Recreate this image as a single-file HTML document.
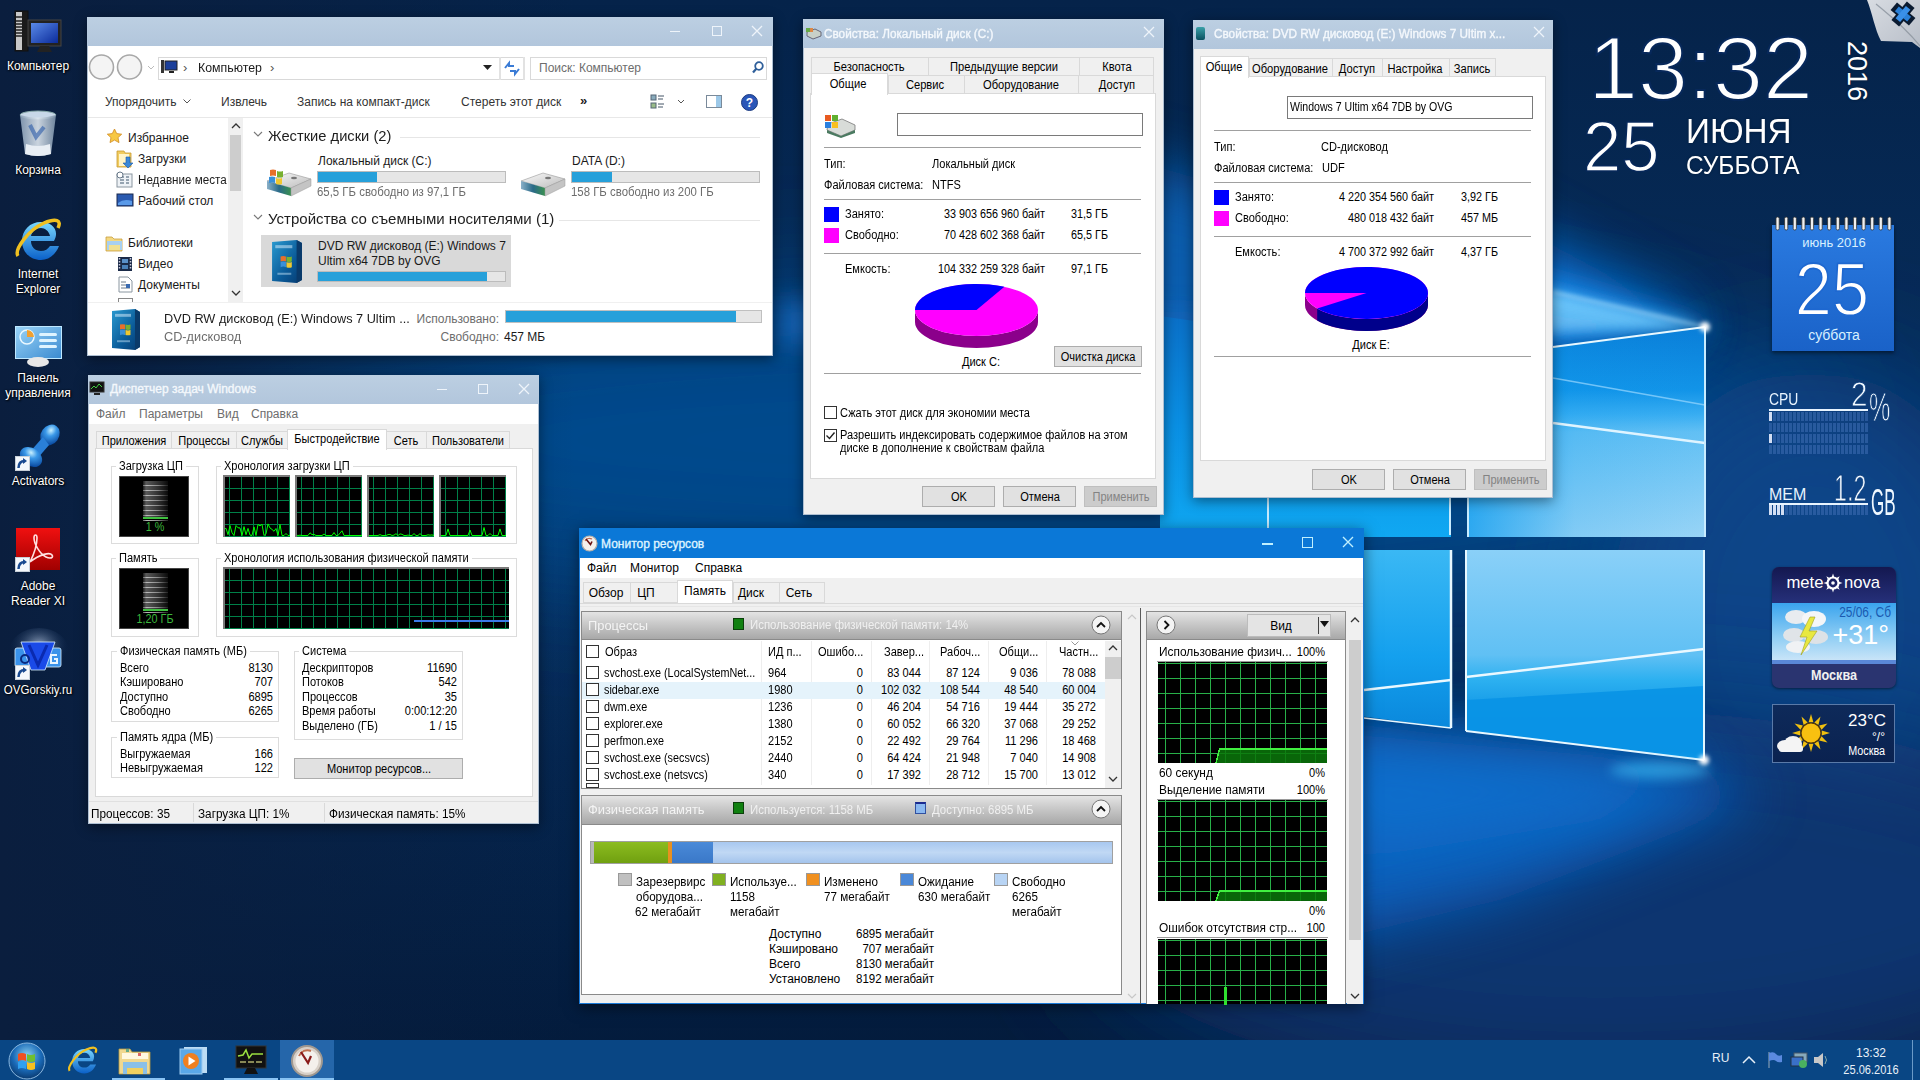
<!DOCTYPE html>
<html><head><meta charset="utf-8">
<style>
*{box-sizing:border-box}
html,body{margin:0;padding:0}
body{width:1920px;height:1080px;position:relative;overflow:hidden;font-family:"Liberation Sans",sans-serif;font-size:12px;color:#000;background:#04214a}
.a{position:absolute}
.t{position:absolute;white-space:nowrap;line-height:1;transform-origin:0 0}
svg{position:absolute;overflow:visible}
</style></head><body>
<svg style="left:0;top:0" width="1920" height="1080" viewBox="0 0 1920 1080">
<defs>
<linearGradient id="bg" x1="0" y1="0" x2="0" y2="1">
<stop offset="0" stop-color="#05234a"/>
<stop offset="0.35" stop-color="#062c5a"/>
<stop offset="0.5" stop-color="#063468"/>
<stop offset="0.7" stop-color="#052650"/>
<stop offset="1" stop-color="#031a3a"/>
</linearGradient>
<linearGradient id="leftdark" x1="0" y1="0" x2="1" y2="0">
<stop offset="0" stop-color="#0a1e3e" stop-opacity="1"/>
<stop offset="0.06" stop-color="#0a1e3e" stop-opacity="0.85"/>
<stop offset="0.3" stop-color="#0a1e3e" stop-opacity="0"/>
</linearGradient>
<linearGradient id="ur" x1="0" y1="0" x2="0" y2="1">
<stop offset="0" stop-color="#0a7ed8"/>
<stop offset="0.3" stop-color="#1294e8"/>
<stop offset="0.42" stop-color="#3aaef2"/>
<stop offset="0.5" stop-color="#62c0f4"/>
<stop offset="1" stop-color="#98d4f6"/>
</linearGradient>
<linearGradient id="ul" x1="0" y1="0" x2="0" y2="1">
<stop offset="0" stop-color="#0a70c8"/>
<stop offset="0.5" stop-color="#0a90e4"/>
<stop offset="1" stop-color="#10a8f2"/>
</linearGradient>
<linearGradient id="lr" x1="0" y1="0" x2="0" y2="1">
<stop offset="0" stop-color="#8ad0f8"/>
<stop offset="0.5" stop-color="#60c0f4"/>
<stop offset="0.62" stop-color="#2cb0f0"/>
<stop offset="0.8" stop-color="#0c92e4"/>
<stop offset="1" stop-color="#0a84d8"/>
</linearGradient>
<linearGradient id="urh" x1="0" y1="0" x2="1" y2="0">
<stop offset="0" stop-color="#0a9aee" stop-opacity="0.75"/>
<stop offset="0.45" stop-color="#0a9aee" stop-opacity="0.15"/>
<stop offset="1" stop-color="#0a9aee" stop-opacity="0"/>
</linearGradient>
<linearGradient id="ll" x1="0" y1="0" x2="0" y2="1">
<stop offset="0" stop-color="#3ab8f4"/>
<stop offset="0.6" stop-color="#14a0ee"/>
<stop offset="1" stop-color="#0a88dc"/>
</linearGradient>
<filter id="b60" x="-50%" y="-50%" width="200%" height="200%"><feGaussianBlur stdDeviation="60"/></filter>
<filter id="b30" x="-50%" y="-50%" width="200%" height="200%"><feGaussianBlur stdDeviation="30"/></filter>
<filter id="b12" x="-50%" y="-50%" width="200%" height="200%"><feGaussianBlur stdDeviation="12"/></filter>
<filter id="b6" x="-50%" y="-50%" width="200%" height="200%"><feGaussianBlur stdDeviation="6"/></filter>
<filter id="b2" x="-50%" y="-50%" width="200%" height="200%"><feGaussianBlur stdDeviation="2"/></filter>
</defs>
<rect width="1920" height="1080" fill="url(#bg)"/>
<!-- middle light band -->
<ellipse cx="1000" cy="440" rx="820" ry="150" fill="#05488c" filter="url(#b60)"/>
<!-- right area -->
<ellipse cx="1810" cy="620" rx="200" ry="250" fill="#0a4488" filter="url(#b60)"/>
<!-- floor glow -->
<ellipse cx="1600" cy="900" rx="520" ry="190" fill="#0a3470" filter="url(#b60)"/>
<polygon points="1150,700 1704,765 1760,800 1500,900 1250,960 1100,900" fill="#0a62c0" opacity="0.9" filter="url(#b30)"/>
<polygon points="1300,730 1704,765 1600,820 1350,860" fill="#0a74d4" opacity="0.7" filter="url(#b30)"/>

<!-- beams from top corner -->
<polygon points="1705,327 1100,150 1100,360" fill="#0a68c0" opacity="0.8" filter="url(#b30)"/>

<polygon points="1705,327 1450,190 1450,360" fill="#0a6ccc" opacity="0.9" filter="url(#b30)"/>
<polygon points="1720,327 1450,250 1450,350" fill="#1a90ec" opacity="0.9" filter="url(#b12)"/>
<polygon points="1705,327 1450,268 1450,335" fill="#7ad0ff" opacity="0.85" filter="url(#b6)"/>

<polygon points="1705,327 780,300 780,345" fill="#1a70c8" opacity="0.7" filter="url(#b12)"/>
<rect width="1920" height="1080" fill="url(#leftdark)"/>
<!-- upper panes -->
<polygon points="1468,357 1705,327 1705,537 1468,537" fill="url(#ur)"/>
<polygon points="1468,357 1705,327 1705,537 1468,537" fill="url(#urh)"/>
<polygon points="1160,316 1451,359 1451,537 1160,537" fill="url(#ul)"/>
<!-- lower panes -->
<polygon points="1466,550 1704,550 1704,760 1466,731" fill="url(#lr)"/>
<polygon points="1160,550 1451,550 1451,728 1160,690" fill="url(#ll)"/>
<polygon points="1466,700 1704,686 1704,760 1466,731" fill="#0a94e6" opacity="0.95"/>
<!-- white lines -->
<line x1="1466" y1="677" x2="1704" y2="649" stroke="#eaf8ff" stroke-width="2.5"/>
<line x1="1364" y1="690" x2="1451" y2="680" stroke="#eaf8ff" stroke-width="2.5"/>
<line x1="1553" y1="423" x2="1705" y2="443" stroke="#dff4ff" stroke-width="2.5"/>
<line x1="1553" y1="378" x2="1705" y2="405" stroke="#9ad8ff" stroke-width="1.5" opacity="0.7"/>
<line x1="1705" y1="327" x2="1705" y2="537" stroke="#c8ecff" stroke-width="2"/>
<line x1="1704" y1="550" x2="1704" y2="760" stroke="#e0f6ff" stroke-width="2"/>
<line x1="1466" y1="731" x2="1704" y2="760" stroke="#e8f8ff" stroke-width="2"/>
<line x1="1466" y1="550" x2="1466" y2="731" stroke="#e8f8ff" stroke-width="2"/>
<line x1="1451" y1="550" x2="1451" y2="728" stroke="#e8f8ff" stroke-width="2.5"/>
<line x1="1364" y1="718" x2="1451" y2="728" stroke="#e8f8ff" stroke-width="1.5"/>
<line x1="1268" y1="498" x2="1268" y2="530" stroke="#c8ecff" stroke-width="2"/>
<line x1="1450" y1="498" x2="1450" y2="535" stroke="#c8ecff" stroke-width="2"/>
<line x1="1468" y1="498" x2="1468" y2="537" stroke="#c8ecff" stroke-width="2"/>
<line x1="1553" y1="347" x2="1705" y2="327" stroke="#e8f8ff" stroke-width="2"/>
<line x1="1553" y1="292" x2="1705" y2="327" stroke="#bfe8ff" stroke-width="2" opacity="0.8" filter="url(#b2)"/>
<!-- corner glows -->
<ellipse cx="1660" cy="770" rx="50" ry="9" fill="#40c8ff" opacity="0.55" filter="url(#b6)"/>
<circle cx="1704" cy="760" r="5" fill="#fff" filter="url(#b2)"/>
<circle cx="1705" cy="327" r="5" fill="#fff" filter="url(#b2)"/>
<!-- top shadow at resmon -->
</svg>
<svg style="left:12px;top:9px" width="52" height="45"><defs><linearGradient id="scr" x1="0" y1="0" x2="1" y2="1"><stop offset="0" stop-color="#5a8ae8"/><stop offset="1" stop-color="#0a2a9a"/></linearGradient></defs><rect x="3" y="2" width="13" height="40" fill="#1a1a1a" stroke="#111"/><rect x="4" y="3" width="6" height="38" fill="#c8c8c8"/><path d="M4 8h6M4 12h6M4 15h6M4 18h6M4 21h6M4 24h6M4 27h6" stroke="#222" stroke-width="1.3"/><rect x="16" y="11" width="33" height="26" fill="#222" stroke="#444"/><rect x="19" y="14" width="27" height="20" fill="url(#scr)"/><path d="M28 37h9l3 6H25z" fill="#222"/></svg>
<div class="t" style="left:38px;top:59.8px;font-size:12px;color:#fff;font-weight:normal;font-family:'Liberation Sans',sans-serif;transform:scaleX(1.0) translateX(-50%);text-shadow:0 0 2px #000,1px 1px 2px #000;">Компьютер</div>
<svg style="left:18px;top:110px" width="40" height="48"><defs><linearGradient id="bin" x1="0" y1="0" x2="1" y2="0"><stop offset="0" stop-color="#8aa0b8"/><stop offset="0.5" stop-color="#dfe8f0"/><stop offset="1" stop-color="#7a90a8"/></linearGradient></defs><ellipse cx="20" cy="5" rx="18" ry="4" fill="#c8d8e8" stroke="#8aa"/><path d="M2 5L7 44Q20 48 33 44L38 5Q20 10 2 5z" fill="url(#bin)" opacity="0.9"/><path d="M8 34Q20 38 32 34L33 44Q20 48 7 44z" fill="#e8eef4"/><path d="M12 15l6 12 8-10" stroke="#2a5aa8" stroke-width="4" fill="none" opacity="0.6"/></svg>
<div class="t" style="left:38px;top:163.8px;font-size:12px;color:#fff;font-weight:normal;font-family:'Liberation Sans',sans-serif;transform:scaleX(1.0) translateX(-50%);text-shadow:0 0 2px #000,1px 1px 2px #000;">Корзина</div>
<svg style="left:14px;top:216px" width="48" height="48" viewBox="0 0 48 48"><defs><linearGradient id="ie14" x1="0" y1="0" x2="0" y2="1"><stop offset="0" stop-color="#7ad8ff"/><stop offset="1" stop-color="#0a60c8"/></linearGradient></defs><path d="M40 25H17C17 31 21 35 27 35C31 35 34 33 36 30H45C42 38 35 44 27 44C16 44 8 36 8 25C8 14 16 6 27 6C38 6 46 14 40 25zM17 20H36C35 15 31 12 27 12C22 12 18 15 17 20z" fill="url(#ie14)"/><path d="M4 40C0 34 14 14 30 7C42 2 48 4 44 12" stroke="#f0c020" stroke-width="3.5" fill="none"/></svg>
<div class="t" style="left:38px;top:267.8px;font-size:12px;color:#fff;font-weight:normal;font-family:'Liberation Sans',sans-serif;transform:scaleX(1.0) translateX(-50%);text-shadow:0 0 2px #000,1px 1px 2px #000;">Internet</div>
<div class="t" style="left:38px;top:282.8px;font-size:12px;color:#fff;font-weight:normal;font-family:'Liberation Sans',sans-serif;transform:scaleX(1.0) translateX(-50%);text-shadow:0 0 2px #000,1px 1px 2px #000;">Explorer</div>
<svg style="left:15px;top:326px" width="47" height="41"><defs><linearGradient id="cp" x1="0" y1="0" x2="1" y2="1"><stop offset="0" stop-color="#9ad4f8"/><stop offset="1" stop-color="#3a8ad0"/></linearGradient></defs><rect x="0.5" y="0.5" width="46" height="32" fill="url(#cp)" stroke="#bfe8ff"/><circle cx="12" cy="11" r="7" fill="none" stroke="#eaf8ff" stroke-width="1.5"/><path d="M12 4a7 7 0 0 1 7 7h-7z" fill="#f0a030"/><rect x="24" y="7" width="18" height="3" rx="1.5" fill="#dff4ff"/><rect x="24" y="13" width="18" height="3" rx="1.5" fill="#dff4ff"/><rect x="24" y="19" width="18" height="3" rx="1.5" fill="#dff4ff"/><ellipse cx="23" cy="36" rx="11" ry="5" fill="#e8e8e8"/></svg>
<div class="t" style="left:38px;top:371.8px;font-size:12px;color:#fff;font-weight:normal;font-family:'Liberation Sans',sans-serif;transform:scaleX(1.0) translateX(-50%);text-shadow:0 0 2px #000,1px 1px 2px #000;">Панель</div>
<div class="t" style="left:38px;top:386.8px;font-size:12px;color:#fff;font-weight:normal;font-family:'Liberation Sans',sans-serif;transform:scaleX(1.0) translateX(-50%);text-shadow:0 0 2px #000,1px 1px 2px #000;">управления</div>
<svg style="left:15px;top:423px" width="46" height="48"><defs><radialGradient id="pin" cx="0.4" cy="0.3" r="0.7"><stop offset="0" stop-color="#c8f0ff"/><stop offset="0.4" stop-color="#3a98e8"/><stop offset="1" stop-color="#0a4aa0"/></radialGradient></defs><ellipse cx="35" cy="12" rx="9" ry="11" transform="rotate(35 35 12)" fill="url(#pin)"/><path d="M28 14L14 30 22 36 34 22z" fill="#2a80d8"/><ellipse cx="16" cy="34" rx="12" ry="9" transform="rotate(35 16 34)" fill="url(#pin)"/></svg>
<svg style="left:15px;top:456px" width="15" height="15"><rect x="0.5" y="0.5" width="14" height="14" fill="#f4f8fc" stroke="#c8d0d8"/><path d="M3.5 12C3.5 7 6 5 10 5" stroke="#1a4a90" stroke-width="2.5" fill="none"/><path d="M8 2l4 3-4 3z" fill="#1a4a90"/></svg>
<div class="t" style="left:38px;top:474.8px;font-size:12px;color:#fff;font-weight:normal;font-family:'Liberation Sans',sans-serif;transform:scaleX(1.0) translateX(-50%);text-shadow:0 0 2px #000,1px 1px 2px #000;">Activators</div>
<svg style="left:16px;top:528px" width="44" height="42"><defs><linearGradient id="adb" x1="0" y1="0" x2="0" y2="1"><stop offset="0" stop-color="#f01010"/><stop offset="1" stop-color="#a00000"/></linearGradient></defs><rect width="44" height="42" fill="url(#adb)"/><path d="M14 34C18 26 21 16 21 10C21 6 18 6 18 10C18 16 24 26 30 29C34 31 38 30 36 27C34 24 24 26 14 34z" stroke="#ffe0e0" stroke-width="1.6" fill="none"/></svg>
<svg style="left:15px;top:557px" width="15" height="15"><rect x="0.5" y="0.5" width="14" height="14" fill="#f4f8fc" stroke="#c8d0d8"/><path d="M3.5 12C3.5 7 6 5 10 5" stroke="#1a4a90" stroke-width="2.5" fill="none"/><path d="M8 2l4 3-4 3z" fill="#1a4a90"/></svg>
<div class="t" style="left:38px;top:579.8px;font-size:12px;color:#fff;font-weight:normal;font-family:'Liberation Sans',sans-serif;transform:scaleX(1.0) translateX(-50%);text-shadow:0 0 2px #000,1px 1px 2px #000;">Adobe</div>
<div class="t" style="left:38px;top:594.8px;font-size:12px;color:#fff;font-weight:normal;font-family:'Liberation Sans',sans-serif;transform:scaleX(1.0) translateX(-50%);text-shadow:0 0 2px #000,1px 1px 2px #000;">Reader XI</div>
<svg style="left:8px;top:628px" width="62" height="50"><defs><radialGradient id="ovgg" cx="0.5" cy="0.35" r="0.5"><stop offset="0" stop-color="#c8d8f0" stop-opacity="0.7"/><stop offset="1" stop-color="#0a2a58" stop-opacity="0"/></radialGradient></defs><ellipse cx="31" cy="24" rx="30" ry="24" fill="url(#ovgg)"/><rect x="7" y="20" width="46" height="19" rx="2" fill="#3a92ea" stroke="#d8f0ff" stroke-width="0.8"/><path d="M13 14h34l-10 28h-14z" fill="#1a4ae8" stroke="#d8f0ff" stroke-width="0.8"/><path d="M21 17l9 20 9-20" stroke="#0a2ab0" stroke-width="3" fill="none"/><circle cx="17" cy="31" r="4" fill="none" stroke="#0a2a80" stroke-width="2"/><path d="M49 27h-6v8h6v-4h-3" stroke="#e8f4ff" stroke-width="2" fill="none"/></svg>
<svg style="left:15px;top:665px" width="15" height="15"><rect x="0.5" y="0.5" width="14" height="14" fill="#f4f8fc" stroke="#c8d0d8"/><path d="M3.5 12C3.5 7 6 5 10 5" stroke="#1a4a90" stroke-width="2.5" fill="none"/><path d="M8 2l4 3-4 3z" fill="#1a4a90"/></svg>
<div class="t" style="left:38px;top:683.8px;font-size:12px;color:#fff;font-weight:normal;font-family:'Liberation Sans',sans-serif;transform:scaleX(0.96) translateX(-50%);text-shadow:0 0 2px #000,1px 1px 2px #000;">OVGorskiy.ru</div>
<div class="t" style="left:1588px;top:24.4px;font-size:89px;color:#fff;font-weight:normal;font-family:'Liberation Sans',sans-serif;transform:scaleX(1.01);-webkit-text-stroke:2.2px #07285a;">13:32</div>
<div class="t" style="left:1843px;top:41px;font-size:27px;color:#fff;transform-origin:0 0;transform:translateX(27px) rotate(90deg);text-shadow:0 0 3px rgba(0,0,0,.3);">2016</div>
<div class="t" style="left:1583px;top:110.7px;font-size:71px;color:#fff;font-weight:normal;font-family:'Liberation Sans',sans-serif;transform:scaleX(0.97);-webkit-text-stroke:1.6px #07285a;">25</div>
<div class="t" style="left:1686px;top:112.8px;font-size:35px;color:#fff;font-weight:normal;font-family:'Liberation Sans',sans-serif;transform:scaleX(0.95);text-shadow:0 0 3px rgba(0,0,0,.3);">ИЮНЯ</div>
<div class="t" style="left:1686px;top:151.9px;font-size:26px;color:#fff;font-weight:normal;font-family:'Liberation Sans',sans-serif;transform:scaleX(0.94);text-shadow:0 0 3px rgba(0,0,0,.3);">СУББОТА</div>
<svg style="left:1860px;top:0px" width="60" height="52"><defs><linearGradient id="curl" x1="0" y1="0" x2="1" y2="1"><stop offset="0" stop-color="#d8dce2"/><stop offset="1" stop-color="#b8bec8"/></linearGradient></defs><path d="M7 0H60V48L52 42 21 41C15 30 12 12 7 0z" fill="url(#curl)"/><path d="M16 4C28 14 44 26 60 46" stroke="#8a929c" stroke-width="1.2" fill="none" opacity="0.8"/><g transform="rotate(40 43 14)"><rect x="31" y="9" width="24" height="10" fill="#0a1a30"/><rect x="38" y="2" width="10" height="24" fill="#0a1a30"/><rect x="35" y="11" width="16" height="6" fill="#2a80d8"/><rect x="40" y="6" width="6" height="16" fill="#3a90e8"/></g></svg>
<div class="a" style="left:1772px;top:225px;width:122px;height:126px;background:linear-gradient(#2a7ae0,#1a62c8);box-shadow:0 2px 4px rgba(0,0,0,.5)"></div>
<svg style="left:1772px;top:216px" width="122" height="16"><rect x="4.0" y="1" width="3.2" height="13" rx="1.5" fill="#f0f0f0" stroke="#333" stroke-width="0.8"/><rect x="12.6" y="1" width="3.2" height="13" rx="1.5" fill="#f0f0f0" stroke="#333" stroke-width="0.8"/><rect x="21.2" y="1" width="3.2" height="13" rx="1.5" fill="#f0f0f0" stroke="#333" stroke-width="0.8"/><rect x="29.8" y="1" width="3.2" height="13" rx="1.5" fill="#f0f0f0" stroke="#333" stroke-width="0.8"/><rect x="38.4" y="1" width="3.2" height="13" rx="1.5" fill="#f0f0f0" stroke="#333" stroke-width="0.8"/><rect x="47.0" y="1" width="3.2" height="13" rx="1.5" fill="#f0f0f0" stroke="#333" stroke-width="0.8"/><rect x="55.6" y="1" width="3.2" height="13" rx="1.5" fill="#f0f0f0" stroke="#333" stroke-width="0.8"/><rect x="64.2" y="1" width="3.2" height="13" rx="1.5" fill="#f0f0f0" stroke="#333" stroke-width="0.8"/><rect x="72.8" y="1" width="3.2" height="13" rx="1.5" fill="#f0f0f0" stroke="#333" stroke-width="0.8"/><rect x="81.4" y="1" width="3.2" height="13" rx="1.5" fill="#f0f0f0" stroke="#333" stroke-width="0.8"/><rect x="90.0" y="1" width="3.2" height="13" rx="1.5" fill="#f0f0f0" stroke="#333" stroke-width="0.8"/><rect x="98.6" y="1" width="3.2" height="13" rx="1.5" fill="#f0f0f0" stroke="#333" stroke-width="0.8"/><rect x="107.2" y="1" width="3.2" height="13" rx="1.5" fill="#f0f0f0" stroke="#333" stroke-width="0.8"/><rect x="115.8" y="1" width="3.2" height="13" rx="1.5" fill="#f0f0f0" stroke="#333" stroke-width="0.8"/></svg>
<div class="t" style="left:1834px;top:236.4px;font-size:13px;color:#d8f0ff;font-weight:normal;font-family:'Liberation Sans',sans-serif;transform:scaleX(1.0) translateX(-50%);">июнь 2016</div>
<div class="t" style="left:1832px;top:252.2px;font-size:75px;color:#fff;font-weight:normal;font-family:'Liberation Sans',sans-serif;transform:scaleX(0.89) translateX(-50%);-webkit-text-stroke:1.8px #1e68d0;">25</div>
<div class="t" style="left:1834px;top:328.1px;font-size:14px;color:#d8f0ff;font-weight:normal;font-family:'Liberation Sans',sans-serif;transform:scaleX(1.0) translateX(-50%);">суббота</div>
<div class="t" style="left:1769px;top:392.4px;font-size:16px;color:#e8f4ff;font-weight:normal;font-family:'Liberation Sans',sans-serif;transform:scaleX(0.87);">CPU</div>
<div class="a" style="left:1769px;top:409px;width:99px;height:1.5px;background:#e8f4ff;"></div>
<div class="t" style="left:1851px;top:376.2px;font-size:35px;color:#f0f8ff;font-weight:normal;font-family:'Liberation Sans',sans-serif;transform:scaleX(0.85);-webkit-text-stroke:0.8px #0a3a78;">2</div>
<div class="t" style="left:1869px;top:387.0px;font-size:40px;color:#f0f8ff;font-weight:normal;font-family:'Liberation Sans',sans-serif;transform:scaleX(0.6);-webkit-text-stroke:1px #0a3a78;">%</div>
<svg style="left:1769px;top:412px" width="100" height="44"><rect x="0" y="0" width="3" height="9" fill="#e8eeff" opacity="0.9"/><rect x="4" y="0" width="3" height="9" fill="#3a6ab0" opacity="0.6"/><rect x="8" y="0" width="3" height="9" fill="#3a6ab0" opacity="0.6"/><rect x="12" y="0" width="3" height="9" fill="#3a6ab0" opacity="0.6"/><rect x="16" y="0" width="3" height="9" fill="#3a6ab0" opacity="0.6"/><rect x="20" y="0" width="3" height="9" fill="#3a6ab0" opacity="0.6"/><rect x="24" y="0" width="3" height="9" fill="#3a6ab0" opacity="0.6"/><rect x="28" y="0" width="3" height="9" fill="#3a6ab0" opacity="0.6"/><rect x="32" y="0" width="3" height="9" fill="#3a6ab0" opacity="0.6"/><rect x="36" y="0" width="3" height="9" fill="#3a6ab0" opacity="0.6"/><rect x="40" y="0" width="3" height="9" fill="#3a6ab0" opacity="0.6"/><rect x="44" y="0" width="3" height="9" fill="#3a6ab0" opacity="0.6"/><rect x="48" y="0" width="3" height="9" fill="#3a6ab0" opacity="0.6"/><rect x="52" y="0" width="3" height="9" fill="#3a6ab0" opacity="0.6"/><rect x="56" y="0" width="3" height="9" fill="#3a6ab0" opacity="0.6"/><rect x="60" y="0" width="3" height="9" fill="#3a6ab0" opacity="0.6"/><rect x="64" y="0" width="3" height="9" fill="#3a6ab0" opacity="0.6"/><rect x="68" y="0" width="3" height="9" fill="#3a6ab0" opacity="0.6"/><rect x="72" y="0" width="3" height="9" fill="#3a6ab0" opacity="0.6"/><rect x="76" y="0" width="3" height="9" fill="#3a6ab0" opacity="0.6"/><rect x="80" y="0" width="3" height="9" fill="#3a6ab0" opacity="0.6"/><rect x="84" y="0" width="3" height="9" fill="#3a6ab0" opacity="0.6"/><rect x="88" y="0" width="3" height="9" fill="#3a6ab0" opacity="0.6"/><rect x="92" y="0" width="3" height="9" fill="#3a6ab0" opacity="0.6"/><rect x="96" y="0" width="3" height="9" fill="#3a6ab0" opacity="0.6"/><rect x="0" y="11" width="3" height="9" fill="#3a6ab0" opacity="0.6"/><rect x="4" y="11" width="3" height="9" fill="#3a6ab0" opacity="0.6"/><rect x="8" y="11" width="3" height="9" fill="#3a6ab0" opacity="0.6"/><rect x="12" y="11" width="3" height="9" fill="#3a6ab0" opacity="0.6"/><rect x="16" y="11" width="3" height="9" fill="#3a6ab0" opacity="0.6"/><rect x="20" y="11" width="3" height="9" fill="#3a6ab0" opacity="0.6"/><rect x="24" y="11" width="3" height="9" fill="#3a6ab0" opacity="0.6"/><rect x="28" y="11" width="3" height="9" fill="#3a6ab0" opacity="0.6"/><rect x="32" y="11" width="3" height="9" fill="#3a6ab0" opacity="0.6"/><rect x="36" y="11" width="3" height="9" fill="#3a6ab0" opacity="0.6"/><rect x="40" y="11" width="3" height="9" fill="#3a6ab0" opacity="0.6"/><rect x="44" y="11" width="3" height="9" fill="#3a6ab0" opacity="0.6"/><rect x="48" y="11" width="3" height="9" fill="#3a6ab0" opacity="0.6"/><rect x="52" y="11" width="3" height="9" fill="#3a6ab0" opacity="0.6"/><rect x="56" y="11" width="3" height="9" fill="#3a6ab0" opacity="0.6"/><rect x="60" y="11" width="3" height="9" fill="#3a6ab0" opacity="0.6"/><rect x="64" y="11" width="3" height="9" fill="#3a6ab0" opacity="0.6"/><rect x="68" y="11" width="3" height="9" fill="#3a6ab0" opacity="0.6"/><rect x="72" y="11" width="3" height="9" fill="#3a6ab0" opacity="0.6"/><rect x="76" y="11" width="3" height="9" fill="#3a6ab0" opacity="0.6"/><rect x="80" y="11" width="3" height="9" fill="#3a6ab0" opacity="0.6"/><rect x="84" y="11" width="3" height="9" fill="#3a6ab0" opacity="0.6"/><rect x="88" y="11" width="3" height="9" fill="#3a6ab0" opacity="0.6"/><rect x="92" y="11" width="3" height="9" fill="#3a6ab0" opacity="0.6"/><rect x="96" y="11" width="3" height="9" fill="#3a6ab0" opacity="0.6"/><rect x="0" y="22" width="3" height="9" fill="#e8eeff" opacity="0.9"/><rect x="4" y="22" width="3" height="9" fill="#3a6ab0" opacity="0.6"/><rect x="8" y="22" width="3" height="9" fill="#3a6ab0" opacity="0.6"/><rect x="12" y="22" width="3" height="9" fill="#3a6ab0" opacity="0.6"/><rect x="16" y="22" width="3" height="9" fill="#3a6ab0" opacity="0.6"/><rect x="20" y="22" width="3" height="9" fill="#3a6ab0" opacity="0.6"/><rect x="24" y="22" width="3" height="9" fill="#3a6ab0" opacity="0.6"/><rect x="28" y="22" width="3" height="9" fill="#3a6ab0" opacity="0.6"/><rect x="32" y="22" width="3" height="9" fill="#3a6ab0" opacity="0.6"/><rect x="36" y="22" width="3" height="9" fill="#3a6ab0" opacity="0.6"/><rect x="40" y="22" width="3" height="9" fill="#3a6ab0" opacity="0.6"/><rect x="44" y="22" width="3" height="9" fill="#3a6ab0" opacity="0.6"/><rect x="48" y="22" width="3" height="9" fill="#3a6ab0" opacity="0.6"/><rect x="52" y="22" width="3" height="9" fill="#3a6ab0" opacity="0.6"/><rect x="56" y="22" width="3" height="9" fill="#3a6ab0" opacity="0.6"/><rect x="60" y="22" width="3" height="9" fill="#3a6ab0" opacity="0.6"/><rect x="64" y="22" width="3" height="9" fill="#3a6ab0" opacity="0.6"/><rect x="68" y="22" width="3" height="9" fill="#3a6ab0" opacity="0.6"/><rect x="72" y="22" width="3" height="9" fill="#3a6ab0" opacity="0.6"/><rect x="76" y="22" width="3" height="9" fill="#3a6ab0" opacity="0.6"/><rect x="80" y="22" width="3" height="9" fill="#3a6ab0" opacity="0.6"/><rect x="84" y="22" width="3" height="9" fill="#3a6ab0" opacity="0.6"/><rect x="88" y="22" width="3" height="9" fill="#3a6ab0" opacity="0.6"/><rect x="92" y="22" width="3" height="9" fill="#3a6ab0" opacity="0.6"/><rect x="96" y="22" width="3" height="9" fill="#3a6ab0" opacity="0.6"/><rect x="0" y="33" width="3" height="9" fill="#3a6ab0" opacity="0.6"/><rect x="4" y="33" width="3" height="9" fill="#3a6ab0" opacity="0.6"/><rect x="8" y="33" width="3" height="9" fill="#3a6ab0" opacity="0.6"/><rect x="12" y="33" width="3" height="9" fill="#3a6ab0" opacity="0.6"/><rect x="16" y="33" width="3" height="9" fill="#3a6ab0" opacity="0.6"/><rect x="20" y="33" width="3" height="9" fill="#3a6ab0" opacity="0.6"/><rect x="24" y="33" width="3" height="9" fill="#3a6ab0" opacity="0.6"/><rect x="28" y="33" width="3" height="9" fill="#3a6ab0" opacity="0.6"/><rect x="32" y="33" width="3" height="9" fill="#3a6ab0" opacity="0.6"/><rect x="36" y="33" width="3" height="9" fill="#3a6ab0" opacity="0.6"/><rect x="40" y="33" width="3" height="9" fill="#3a6ab0" opacity="0.6"/><rect x="44" y="33" width="3" height="9" fill="#3a6ab0" opacity="0.6"/><rect x="48" y="33" width="3" height="9" fill="#3a6ab0" opacity="0.6"/><rect x="52" y="33" width="3" height="9" fill="#3a6ab0" opacity="0.6"/><rect x="56" y="33" width="3" height="9" fill="#3a6ab0" opacity="0.6"/><rect x="60" y="33" width="3" height="9" fill="#3a6ab0" opacity="0.6"/><rect x="64" y="33" width="3" height="9" fill="#3a6ab0" opacity="0.6"/><rect x="68" y="33" width="3" height="9" fill="#3a6ab0" opacity="0.6"/><rect x="72" y="33" width="3" height="9" fill="#3a6ab0" opacity="0.6"/><rect x="76" y="33" width="3" height="9" fill="#3a6ab0" opacity="0.6"/><rect x="80" y="33" width="3" height="9" fill="#3a6ab0" opacity="0.6"/><rect x="84" y="33" width="3" height="9" fill="#3a6ab0" opacity="0.6"/><rect x="88" y="33" width="3" height="9" fill="#3a6ab0" opacity="0.6"/><rect x="92" y="33" width="3" height="9" fill="#3a6ab0" opacity="0.6"/><rect x="96" y="33" width="3" height="9" fill="#3a6ab0" opacity="0.6"/></svg>
<div class="t" style="left:1769px;top:487.4px;font-size:16px;color:#e8f4ff;font-weight:normal;font-family:'Liberation Sans',sans-serif;transform:scaleX(1.0);">MEM</div>
<div class="t" style="left:1834px;top:469.6px;font-size:37px;color:#f0f8ff;font-weight:normal;font-family:'Liberation Sans',sans-serif;transform:scaleX(0.63);-webkit-text-stroke:0.8px #0a3a78;">1.2</div>
<div class="t" style="left:1871px;top:483.6px;font-size:37px;color:#f0f8ff;font-weight:normal;font-family:'Liberation Sans',sans-serif;transform:scaleX(0.46);">GB</div>
<div class="a" style="left:1769px;top:503px;width:99px;height:1.5px;background:#e8f4ff;"></div>
<svg style="left:1769px;top:505px" width="100" height="10"><rect x="0" y="0" width="3" height="10" fill="#e8eeff" opacity="0.9"/><rect x="4" y="0" width="3" height="10" fill="#e8eeff" opacity="0.9"/><rect x="8" y="0" width="3" height="10" fill="#e8eeff" opacity="0.9"/><rect x="12" y="0" width="3" height="10" fill="#e8eeff" opacity="0.9"/><rect x="16" y="0" width="3" height="10" fill="#3a6ab0" opacity="0.6"/><rect x="20" y="0" width="3" height="10" fill="#3a6ab0" opacity="0.6"/><rect x="24" y="0" width="3" height="10" fill="#3a6ab0" opacity="0.6"/><rect x="28" y="0" width="3" height="10" fill="#3a6ab0" opacity="0.6"/><rect x="32" y="0" width="3" height="10" fill="#3a6ab0" opacity="0.6"/><rect x="36" y="0" width="3" height="10" fill="#3a6ab0" opacity="0.6"/><rect x="40" y="0" width="3" height="10" fill="#3a6ab0" opacity="0.6"/><rect x="44" y="0" width="3" height="10" fill="#3a6ab0" opacity="0.6"/><rect x="48" y="0" width="3" height="10" fill="#3a6ab0" opacity="0.6"/><rect x="52" y="0" width="3" height="10" fill="#3a6ab0" opacity="0.6"/><rect x="56" y="0" width="3" height="10" fill="#3a6ab0" opacity="0.6"/><rect x="60" y="0" width="3" height="10" fill="#3a6ab0" opacity="0.6"/><rect x="64" y="0" width="3" height="10" fill="#3a6ab0" opacity="0.6"/><rect x="68" y="0" width="3" height="10" fill="#3a6ab0" opacity="0.6"/><rect x="72" y="0" width="3" height="10" fill="#3a6ab0" opacity="0.6"/><rect x="76" y="0" width="3" height="10" fill="#3a6ab0" opacity="0.6"/><rect x="80" y="0" width="3" height="10" fill="#3a6ab0" opacity="0.6"/><rect x="84" y="0" width="3" height="10" fill="#3a6ab0" opacity="0.6"/><rect x="88" y="0" width="3" height="10" fill="#3a6ab0" opacity="0.6"/><rect x="92" y="0" width="3" height="10" fill="#3a6ab0" opacity="0.6"/><rect x="96" y="0" width="3" height="10" fill="#3a6ab0" opacity="0.6"/></svg>
<div class="a" style="left:1772px;top:567px;width:124px;height:121px;background:#2a3470;border-radius:7px;overflow:hidden;box-shadow:0 1px 3px rgba(0,0,0,.5)"></div>
<div class="a" style="left:1772px;top:567px;width:124px;height:36px;background:linear-gradient(#141850,#26307a);border-radius:7px 7px 0 0"></div>
<div class="t" style="left:1805px;top:573.5px;font-size:17px;color:#fff;font-weight:normal;font-family:'Liberation Sans',sans-serif;transform:scaleX(0.98) translateX(-50%);">mete</div>
<div class="t" style="left:1862px;top:573.5px;font-size:17px;color:#fff;font-weight:normal;font-family:'Liberation Sans',sans-serif;transform:scaleX(0.98) translateX(-50%);">nova</div>
<svg style="left:1823px;top:573px" width="20" height="20"><path d="M15.9,8.8L19.5,10.0L15.9,11.2z" fill="#fff"/><path d="M15.0,13.3L16.7,16.7L13.3,15.0z" fill="#fff"/><path d="M11.2,15.9L10.0,19.5L8.8,15.9z" fill="#fff"/><path d="M6.7,15.0L3.3,16.7L5.0,13.3z" fill="#fff"/><path d="M4.1,11.2L0.5,10.0L4.1,8.8z" fill="#fff"/><path d="M5.0,6.7L3.3,3.3L6.7,5.0z" fill="#fff"/><path d="M8.8,4.1L10.0,0.5L11.2,4.1z" fill="#fff"/><path d="M13.3,5.0L16.7,3.3L15.0,6.7z" fill="#fff"/><circle cx="10" cy="10" r="5.5" fill="none" stroke="#fff" stroke-width="2.2"/><circle cx="10" cy="10" r="1.8" fill="#fff"/></svg>
<div class="a" style="left:1772px;top:603px;width:124px;height:57px;background:linear-gradient(#3aa4ee,#90cef4 60%,#c8e4f8);"></div>
<svg style="left:1782px;top:605px" width="50" height="52"><ellipse cx="14" cy="12" rx="11" ry="7" fill="#e8ecf0"/><ellipse cx="32" cy="14" rx="12" ry="8" fill="#f4f6f8"/><ellipse cx="12" cy="30" rx="11" ry="7" fill="#e0e4e8"/><ellipse cx="34" cy="32" rx="12" ry="7" fill="#dde2e6"/><ellipse cx="16" cy="42" rx="12" ry="6" fill="#f0f2f4"/><path d="M28 12L18 32h7l-6 18 16-24h-8l6-14z" fill="#e8e840" stroke="#a0a020" stroke-width="0.6"/></svg>
<div class="t" style="left:1891px;top:605.1px;font-size:14px;color:#1a5ab0;font-weight:normal;font-family:'Liberation Sans',sans-serif;transform:scaleX(0.85) translateX(-100%);">25/06, Сб</div>
<div class="t" style="left:1889px;top:622.0px;font-size:27px;color:#fff;font-weight:normal;font-family:'Liberation Sans',sans-serif;transform:scaleX(1.0) translateX(-100%);">+31°</div>
<div class="a" style="left:1772px;top:660px;width:124px;height:4px;background:#5a88d8;"></div>
<div class="t" style="left:1834px;top:668.1px;font-size:14px;color:#f0f0f0;font-weight:bold;font-family:'Liberation Sans',sans-serif;transform:scaleX(0.9) translateX(-50%);">Москва</div>
<div class="a" style="left:1772px;top:704px;width:123px;height:59px;background:linear-gradient(#0e2a5a,#0a2250);border:1px solid #5a7aa8"></div>
<svg style="left:1791px;top:714px" width="42" height="40"><path d="M30.7,16.6L39.0,19.0L30.7,21.4z" fill="#f0c010"/><path d="M30.5,22.3L36.5,28.5L28.1,26.4z" fill="#f0c010"/><path d="M27.4,27.1L29.5,35.5L23.3,29.5z" fill="#f0c010"/><path d="M22.4,29.7L20.0,38.0L17.6,29.7z" fill="#f0c010"/><path d="M16.7,29.5L10.5,35.5L12.6,27.1z" fill="#f0c010"/><path d="M11.9,26.4L3.5,28.5L9.5,22.3z" fill="#f0c010"/><path d="M9.3,21.4L1.0,19.0L9.3,16.6z" fill="#f0c010"/><path d="M9.5,15.7L3.5,9.5L11.9,11.6z" fill="#f0c010"/><path d="M12.6,10.9L10.5,2.5L16.7,8.5z" fill="#f0c010"/><path d="M17.6,8.3L20.0,0.0L22.4,8.3z" fill="#f0c010"/><path d="M23.3,8.5L29.5,2.5L27.4,10.9z" fill="#f0c010"/><path d="M28.1,11.6L36.5,9.5L30.5,15.7z" fill="#f0c010"/><circle cx="20" cy="19" r="10" fill="#f8c010" stroke="#5a3a00" stroke-width="1.2"/></svg>
<svg style="left:1776px;top:735px" width="30" height="18"><ellipse cx="9" cy="11" rx="8" ry="6" fill="#f4f4f4"/><ellipse cx="17" cy="9" rx="9" ry="8" fill="#f4f4f4"/><rect x="3" y="10" width="24" height="7" rx="3" fill="#f4f4f4"/></svg>
<div class="t" style="left:1886px;top:711.5px;font-size:17px;color:#fff;font-weight:normal;font-family:'Liberation Sans',sans-serif;transform:scaleX(1.0) translateX(-100%);">23°C</div>
<div class="t" style="left:1885px;top:730.8px;font-size:12px;color:#fff;font-weight:normal;font-family:'Liberation Sans',sans-serif;transform:scaleX(1.0) translateX(-100%);">°/°</div>
<div class="t" style="left:1885px;top:744.8px;font-size:12px;color:#fff;font-weight:normal;font-family:'Liberation Sans',sans-serif;transform:scaleX(0.9) translateX(-100%);">Москва</div>
<div class="a" style="left:87px;top:17px;width:686px;height:339px;background:#fff;border:1px solid #aebfd2;box-shadow:0 3px 12px rgba(0,0,0,.45)"></div>
<div class="a" style="left:87px;top:17px;width:686px;height:29px;background:linear-gradient(#bccfe2,#b2c6dc);"></div>
<div class="a" style="left:670px;top:31px;width:10px;height:1px;background:#eef4fa;"></div>
<div class="a" style="left:712px;top:26px;width:10px;height:10px;background:none;border:1px solid #eef4fa;"></div>
<svg style="left:751px;top:25px" width="12" height="12"><path d="M1 1L11 11M11 1L1 11" stroke="#eef4fa" stroke-width="1.3"/></svg>
<svg style="left:88px;top:54px" width="70" height="28"><circle cx="13.5" cy="13" r="12" fill="#f4f4f4" stroke="#a8a8a8" stroke-width="1.6"/><circle cx="41.5" cy="13" r="12" fill="#f4f4f4" stroke="#a8a8a8" stroke-width="1.6"/><path d="M60 12l3 3 3-3" stroke="#bbb" fill="none"/></svg>
<div class="a" style="left:158px;top:57px;width:366px;height:23px;background:#fff;border:1px solid #d9d9d9;"></div>
<div class="a" style="left:523px;top:57px;width:0px;height:23px;background:none;border:1px solid #e2e2e2;"></div>
<div class="a" style="left:499px;top:57px;width:0px;height:23px;background:none;border:1px solid #e2e2e2;"></div>
<svg style="left:161px;top:60px" width="17" height="14"><rect x="0" y="0" width="3" height="13" fill="#333"/><rect x="4" y="1" width="12" height="9" fill="#1c3f9a" stroke="#222" stroke-width="1"/><rect x="8" y="11" width="5" height="2" fill="#222"/></svg>
<div class="t" style="left:183px;top:61.0px;font-size:13px;color:#555;font-weight:normal;font-family:'Liberation Sans',sans-serif;transform:scaleX(1);">›</div>
<div class="t" style="left:198px;top:61.8px;font-size:12px;color:#1a1a1a;font-weight:normal;font-family:'Liberation Sans',sans-serif;transform:scaleX(1.03);">Компьютер</div>
<div class="t" style="left:270px;top:61.0px;font-size:13px;color:#555;font-weight:normal;font-family:'Liberation Sans',sans-serif;transform:scaleX(1);">›</div>
<svg style="left:483px;top:65px" width="10" height="6"><path d="M0 0h9l-4.5 5z" fill="#222"/></svg>
<svg style="left:503px;top:60px" width="18" height="17"><path d="M2 8l4-5v3h5" stroke="#3a7bd5" stroke-width="2" fill="none"/><path d="M16 9l-4 5v-3H7" stroke="#3a7bd5" stroke-width="2" fill="none"/></svg>
<div class="a" style="left:530px;top:57px;width:237px;height:23px;background:#fff;border:1px solid #d9d9d9;"></div>
<div class="t" style="left:539px;top:61.8px;font-size:12px;color:#6d6d6d;font-weight:normal;font-family:'Liberation Sans',sans-serif;transform:scaleX(1.0);">Поиск: Компьютер</div>
<svg style="left:752px;top:61px" width="12" height="13"><circle cx="7" cy="5" r="3.8" stroke="#2f5f9a" stroke-width="1.8" fill="none"/><path d="M4.5 7.5L1 11.5" stroke="#2f5f9a" stroke-width="2.2"/></svg>
<div class="t" style="left:105px;top:95.8px;font-size:12px;color:#333;font-weight:normal;font-family:'Liberation Sans',sans-serif;transform:scaleX(1.0);">Упорядочить</div>
<div class="t" style="left:221px;top:95.8px;font-size:12px;color:#333;font-weight:normal;font-family:'Liberation Sans',sans-serif;transform:scaleX(1.0);">Извлечь</div>
<div class="t" style="left:297px;top:95.8px;font-size:12px;color:#333;font-weight:normal;font-family:'Liberation Sans',sans-serif;transform:scaleX(1.0);">Запись на компакт-диск</div>
<div class="t" style="left:461px;top:95.8px;font-size:12px;color:#333;font-weight:normal;font-family:'Liberation Sans',sans-serif;transform:scaleX(1.0);">Стереть этот диск</div>
<svg style="left:183px;top:99px" width="8" height="5"><path d="M0.5 0.5l3.5 3.5 3.5-3.5" stroke="#555" fill="none"/></svg>
<div class="t" style="left:580px;top:94.0px;font-size:13px;color:#222;font-weight:bold;font-family:'Liberation Sans',sans-serif;transform:scaleX(1);">»</div>
<svg style="left:650px;top:94px" width="40" height="16"><rect x="1" y="1" width="5" height="5" fill="#8ab" stroke="#567"/><rect x="1" y="9" width="5" height="5" fill="#9b8" stroke="#567"/><path d="M8 2h6M8 5h5M8 10h6M8 13h5" stroke="#456"/><path d="M28 6l3 3 3-3" stroke="#555" fill="none"/></svg>
<div class="a" style="left:706px;top:95px;width:16px;height:13px;background:#fff;border:1px solid #7a8a9a;"></div>
<div class="a" style="left:716px;top:96px;width:5px;height:11px;background:#9cc8e8;"></div>
<svg style="left:741px;top:94px" width="17" height="17"><circle cx="8.5" cy="8.5" r="8" fill="#2a56b8" stroke="#1a3a80"/><text x="8.5" y="13" font-size="12" font-weight="bold" fill="#fff" text-anchor="middle" font-family="Liberation Sans">?</text></svg>
<div class="a" style="left:88px;top:117px;width:684px;height:1px;background:#e8e8e8;"></div>
<div class="a" style="left:228px;top:118px;width:15px;height:185px;background:#f0f0f0;"></div>
<div class="a" style="left:230px;top:135px;width:11px;height:56px;background:#cdcdcd;"></div>
<svg style="left:231px;top:123px" width="10" height="6"><path d="M1 5l4-4 4 4" stroke="#333" fill="none" stroke-width="1.3"/></svg>
<svg style="left:231px;top:290px" width="10" height="6"><path d="M1 1l4 4 4-4" stroke="#333" fill="none" stroke-width="1.3"/></svg>
<svg style="left:106px;top:128px" width="17" height="16"><path d="M8.5 1l2.2 4.6 5 .6-3.7 3.4 1 5-4.5-2.5-4.5 2.5 1-5L1.3 6.2l5-.6z" fill="#f7c844" stroke="#d08a20" stroke-width="0.8"/></svg>
<div class="t" style="left:128px;top:131.8px;font-size:12px;color:#1a1a1a;font-weight:normal;font-family:'Liberation Sans',sans-serif;transform:scaleX(1.0);">Избранное</div>
<svg style="left:116px;top:150px" width="18" height="18"><path d="M1 1h7l1 2h6v14H1z" fill="#f0cc60" stroke="#c89a30" stroke-width="0.8"/><rect x="3" y="4" width="10" height="12" fill="#fff4c8"/><path d="M10 7v6h-3l5 5 5-5h-3V7z" fill="#3a88d8" stroke="#1a58a8" stroke-width="0.6"/></svg>
<div class="t" style="left:138px;top:152.8px;font-size:12px;color:#1a1a1a;font-weight:normal;font-family:'Liberation Sans',sans-serif;transform:scaleX(1.0);">Загрузки</div>
<svg style="left:116px;top:171px" width="18" height="17"><rect x="1" y="3" width="15" height="13" fill="#eef2f6" stroke="#8a96a0"/><path d="M4 6h4M4 9h4M4 12h4M10 6h3M10 9h3M10 12h3" stroke="#7a8a9a" stroke-width="1.4"/><circle cx="4" cy="4" r="3" fill="#fff" stroke="#678"/></svg>
<div class="t" style="left:138px;top:173.8px;font-size:12px;color:#1a1a1a;font-weight:normal;font-family:'Liberation Sans',sans-serif;transform:scaleX(0.97);">Недавние места</div>
<svg style="left:116px;top:193px" width="18" height="15"><rect x="1" y="1" width="16" height="12" fill="#2a5ab0" stroke="#1a2a50"/><path d="M2 10q6-5 14-2v4H2z" fill="#5a9ae8"/></svg>
<div class="t" style="left:138px;top:194.8px;font-size:12px;color:#1a1a1a;font-weight:normal;font-family:'Liberation Sans',sans-serif;transform:scaleX(1.0);">Рабочий стол</div>
<svg style="left:105px;top:235px" width="19" height="17"><path d="M1 2h6l2 2h8v12H1z" fill="#f4d880" stroke="#c8a040" stroke-width="0.8"/><rect x="2" y="6" width="15" height="9" fill="#a8d0f0"/><rect x="4" y="10" width="11" height="5" fill="#f0e090"/></svg>
<div class="t" style="left:128px;top:236.8px;font-size:12px;color:#1a1a1a;font-weight:normal;font-family:'Liberation Sans',sans-serif;transform:scaleX(1.0);">Библиотеки</div>
<svg style="left:117px;top:256px" width="16" height="16"><rect x="1" y="1" width="14" height="14" fill="#1a2a48"/><path d="M2.5 2v12M13.5 2v12" stroke="#ccd" stroke-width="1.5" stroke-dasharray="1.5 1.5"/><rect x="5" y="3" width="6" height="4" fill="#5a90c8"/><rect x="5" y="9" width="6" height="4" fill="#4a80b8"/></svg>
<div class="t" style="left:138px;top:257.8px;font-size:12px;color:#1a1a1a;font-weight:normal;font-family:'Liberation Sans',sans-serif;transform:scaleX(1.0);">Видео</div>
<svg style="left:118px;top:276px" width="15" height="17"><path d="M1 1h9l4 4v11H1z" fill="#fff" stroke="#8a96a0"/><path d="M3 6h5M3 9h9M3 12h9" stroke="#6a7a8a"/><rect x="8" y="8" width="4" height="4" fill="#3a6ab0"/></svg>
<div class="t" style="left:138px;top:278.8px;font-size:12px;color:#1a1a1a;font-weight:normal;font-family:'Liberation Sans',sans-serif;transform:scaleX(1.0);">Документы</div>
<div class="a" style="left:118px;top:298px;width:15px;height:5px;background:#fff;border:1px solid #888;"></div>
<svg style="left:253px;top:131px" width="10" height="6"><path d="M1 1l4 4 4-4" stroke="#777" fill="none" stroke-width="1.1"/></svg>
<div class="t" style="left:268px;top:129.1px;font-size:14px;color:#1e1e1e;font-weight:normal;font-family:'Liberation Sans',sans-serif;transform:scaleX(1.05);">Жесткие диски (2)</div>
<div class="a" style="left:400px;top:137px;width:360px;height:1px;background:#e6e6e6;"></div>
<svg style="left:264px;top:167px" width="50" height="32"><defs><linearGradient id="dg264" x1="0" y1="0" x2="1" y2="1"><stop offset="0" stop-color="#fafafa"/><stop offset="1" stop-color="#bcbcbc"/></linearGradient><linearGradient id="df264" x1="0" y1="0" x2="1" y2="0"><stop offset="0" stop-color="#8ab0c8"/><stop offset="0.5" stop-color="#2a6a88"/><stop offset="1" stop-color="#3a9050"/></linearGradient></defs><path d="M3 14L25 6 47 12 27 21z" fill="url(#dg264)" stroke="#999" stroke-width="0.6"/><path d="M3 14L27 21 27 29 3 22z" fill="url(#df264)"/><path d="M27 21L47 12 47 19 27 29z" fill="#c4c4c4" stroke="#999" stroke-width="0.5"/><ellipse cx="30" cy="11" rx="3" ry="1.2" fill="#777"/><path d="M6 3q3-1 6 0v6q-3-1-6 0z" fill="#e8702a"/><path d="M13 4q3 1 6 0v6q-3 1-6 0z" fill="#78b030"/><path d="M5 10q3-1 6 0v6q-3-1-6 0z" fill="#3a90d8"/><path d="M12 11q3 1 6 0v6q-3 1-6 0z" fill="#f0c830"/></svg>
<div class="t" style="left:318px;top:154.8px;font-size:12px;color:#1a1a1a;font-weight:normal;font-family:'Liberation Sans',sans-serif;transform:scaleX(1.0);">Локальный диск (C:)</div>
<div class="a" style="left:317px;top:171px;width:189px;height:12px;background:#e6e6e6;border:1px solid #bcbcbc;"></div>
<div class="a" style="left:318px;top:172px;width:59px;height:10px;background:#26a0da;"></div>
<div class="t" style="left:317px;top:185.8px;font-size:12px;color:#6d6d6d;font-weight:normal;font-family:'Liberation Sans',sans-serif;transform:scaleX(0.95);">65,5 ГБ свободно из 97,1 ГБ</div>
<svg style="left:518px;top:167px" width="50" height="32"><defs><linearGradient id="dg518" x1="0" y1="0" x2="1" y2="1"><stop offset="0" stop-color="#fafafa"/><stop offset="1" stop-color="#bcbcbc"/></linearGradient><linearGradient id="df518" x1="0" y1="0" x2="1" y2="0"><stop offset="0" stop-color="#8ab0c8"/><stop offset="0.5" stop-color="#2a6a88"/><stop offset="1" stop-color="#3a9050"/></linearGradient></defs><path d="M3 14L25 6 47 12 27 21z" fill="url(#dg518)" stroke="#999" stroke-width="0.6"/><path d="M3 14L27 21 27 29 3 22z" fill="url(#df518)"/><path d="M27 21L47 12 47 19 27 29z" fill="#c4c4c4" stroke="#999" stroke-width="0.5"/><ellipse cx="30" cy="11" rx="3" ry="1.2" fill="#777"/></svg>
<div class="t" style="left:572px;top:154.8px;font-size:12px;color:#1a1a1a;font-weight:normal;font-family:'Liberation Sans',sans-serif;transform:scaleX(1.0);">DATA (D:)</div>
<div class="a" style="left:571px;top:171px;width:189px;height:12px;background:#e6e6e6;border:1px solid #bcbcbc;"></div>
<div class="a" style="left:572px;top:172px;width:40px;height:10px;background:#26a0da;"></div>
<div class="t" style="left:571px;top:185.8px;font-size:12px;color:#6d6d6d;font-weight:normal;font-family:'Liberation Sans',sans-serif;transform:scaleX(0.95);">158 ГБ свободно из 200 ГБ</div>
<svg style="left:253px;top:214px" width="10" height="6"><path d="M1 1l4 4 4-4" stroke="#777" fill="none" stroke-width="1.1"/></svg>
<div class="t" style="left:268px;top:212.1px;font-size:14px;color:#1e1e1e;font-weight:normal;font-family:'Liberation Sans',sans-serif;transform:scaleX(1.075);">Устройства со съемными носителями (1)</div>
<div class="a" style="left:559px;top:220px;width:201px;height:1px;background:#e6e6e6;"></div>
<div class="a" style="left:261px;top:235px;width:250px;height:52px;background:#d9d9d9;"></div>
<svg style="left:271px;top:239px" width="32" height="45" viewBox="0 0 30 44" preserveAspectRatio="none"><defs><linearGradient id="db271" x1="0" y1="0" x2="1" y2="1"><stop offset="0" stop-color="#2a9ad0"/><stop offset="0.6" stop-color="#0a5a98"/><stop offset="1" stop-color="#063a70"/></linearGradient></defs><path d="M1 3L24 1 29 4 29 40 24 43 1 41z" fill="url(#db271)"/><path d="M24 1L29 4 29 40 24 43z" fill="#0a3a6a"/><rect x="4" y="6" width="16" height="3" fill="#cfe8f8" opacity="0.55"/><path d="M9 17q2.5-1 5 0v5q-2.5-1-5 0z" fill="#e8702a"/><path d="M14.5 17q2.5 1 5 0v5q-2.5 1-5 0z" fill="#78b030"/><path d="M9 22.5q2.5-1 5 0v5q-2.5-1-5 0z" fill="#3a90d8"/><path d="M14.5 22.5q2.5 1 5 0v5q-2.5 1-5 0z" fill="#f0c830"/><rect x="6" y="33" width="13" height="2" fill="#bfe0f4" opacity="0.5"/></svg>
<div class="t" style="left:318px;top:239.8px;font-size:12px;color:#1a1a1a;font-weight:normal;font-family:'Liberation Sans',sans-serif;transform:scaleX(1.0);">DVD RW дисковод (E:) Windows 7</div>
<div class="t" style="left:318px;top:254.8px;font-size:12px;color:#1a1a1a;font-weight:normal;font-family:'Liberation Sans',sans-serif;transform:scaleX(1.0);">Ultim x64 7DB by OVG</div>
<div class="a" style="left:317px;top:271px;width:189px;height:11px;background:#e6e6e6;border:1px solid #bcbcbc;"></div>
<div class="a" style="left:318px;top:272px;width:169px;height:9px;background:#26a0da;"></div>
<div class="a" style="left:88px;top:302px;width:684px;height:1px;background:#f0f0f0;"></div>
<svg style="left:111px;top:308px" width="30" height="43" viewBox="0 0 30 44" preserveAspectRatio="none"><defs><linearGradient id="db111" x1="0" y1="0" x2="1" y2="1"><stop offset="0" stop-color="#2a9ad0"/><stop offset="0.6" stop-color="#0a5a98"/><stop offset="1" stop-color="#063a70"/></linearGradient></defs><path d="M1 3L24 1 29 4 29 40 24 43 1 41z" fill="url(#db111)"/><path d="M24 1L29 4 29 40 24 43z" fill="#0a3a6a"/><rect x="4" y="6" width="16" height="3" fill="#cfe8f8" opacity="0.55"/><path d="M9 17q2.5-1 5 0v5q-2.5-1-5 0z" fill="#e8702a"/><path d="M14.5 17q2.5 1 5 0v5q-2.5 1-5 0z" fill="#78b030"/><path d="M9 22.5q2.5-1 5 0v5q-2.5-1-5 0z" fill="#3a90d8"/><path d="M14.5 22.5q2.5 1 5 0v5q-2.5 1-5 0z" fill="#f0c830"/><rect x="6" y="33" width="13" height="2" fill="#bfe0f4" opacity="0.5"/></svg>
<div class="t" style="left:164px;top:312.8px;font-size:12px;color:#1a1a1a;font-weight:normal;font-family:'Liberation Sans',sans-serif;transform:scaleX(1.06);">DVD RW дисковод (E:) Windows 7 Ultim ...</div>
<div class="t" style="left:164px;top:330.8px;font-size:12px;color:#6d6d6d;font-weight:normal;font-family:'Liberation Sans',sans-serif;transform:scaleX(1.06);">CD-дисковод</div>
<div class="t" style="left:499px;top:312.8px;font-size:12px;color:#6d6d6d;font-weight:normal;font-family:'Liberation Sans',sans-serif;transform:scaleX(1.0) translateX(-100%);">Использовано:</div>
<div class="a" style="left:505px;top:310px;width:257px;height:13px;background:#e6e6e6;border:1px solid #c0c0c0;"></div>
<div class="a" style="left:506px;top:311px;width:230px;height:11px;background:#26a0da;"></div>
<div class="t" style="left:499px;top:330.8px;font-size:12px;color:#6d6d6d;font-weight:normal;font-family:'Liberation Sans',sans-serif;transform:scaleX(1.0) translateX(-100%);">Свободно:</div>
<div class="t" style="left:504px;top:330.8px;font-size:12px;color:#1a1a1a;font-weight:normal;font-family:'Liberation Sans',sans-serif;transform:scaleX(1.0);">457 МБ</div>
<div class="a" style="left:803px;top:19px;width:361px;height:496px;background:#f0f0f0;border:1px solid #aebfd2;box-shadow:0 3px 12px rgba(0,0,0,.45)"></div>
<div class="a" style="left:803px;top:19px;width:361px;height:29px;background:linear-gradient(#bccfe2,#b2c6dc);"></div>
<svg style="left:805px;top:26px" width="16" height="14"><path d="M2 6l8-3 6 3v4l-8 3-6-3z" fill="#c8d0c8" stroke="#667"/><rect x="1" y="2" width="4" height="4" fill="#6a4"/><rect x="5" y="2" width="3" height="4" fill="#d84"/></svg>
<div class="t" style="left:824px;top:27.8px;font-size:12px;color:#f4f8fc;font-weight:normal;font-family:'Liberation Sans',sans-serif;transform:scaleX(0.98);-webkit-text-stroke:0.35px currentColor;">Свойства: Локальный диск (C:)</div>
<svg style="left:1143px;top:26px" width="12" height="12"><path d="M1 1L11 11M11 1L1 11" stroke="#eef4fa" stroke-width="1.3"/></svg>
<div class="a" style="left:811px;top:57px;width:343px;height:18px;background:#f0f0f0;border:1px solid #d9d9d9;border-bottom:none"></div>
<div class="a" style="left:928px;top:57px;width:1px;height:18px;background:#d9d9d9;"></div>
<div class="a" style="left:1079px;top:57px;width:1px;height:18px;background:#d9d9d9;"></div>
<div class="t" style="left:869px;top:60.8px;font-size:12px;color:#000;font-weight:normal;font-family:'Liberation Sans',sans-serif;transform:scaleX(0.93) translateX(-50%);">Безопасность</div>
<div class="t" style="left:1004px;top:60.8px;font-size:12px;color:#000;font-weight:normal;font-family:'Liberation Sans',sans-serif;transform:scaleX(0.93) translateX(-50%);">Предыдущие версии</div>
<div class="t" style="left:1117px;top:60.8px;font-size:12px;color:#000;font-weight:normal;font-family:'Liberation Sans',sans-serif;transform:scaleX(0.93) translateX(-50%);">Квота</div>
<div class="a" style="left:811px;top:75px;width:343px;height:19px;background:#f0f0f0;border:1px solid #d9d9d9"></div>
<div class="a" style="left:888px;top:75px;width:1px;height:19px;background:#d9d9d9;"></div>
<div class="a" style="left:964px;top:75px;width:1px;height:19px;background:#d9d9d9;"></div>
<div class="a" style="left:1078px;top:75px;width:1px;height:19px;background:#d9d9d9;"></div>
<div class="t" style="left:925px;top:78.8px;font-size:12px;color:#000;font-weight:normal;font-family:'Liberation Sans',sans-serif;transform:scaleX(0.93) translateX(-50%);">Сервис</div>
<div class="t" style="left:1021px;top:78.8px;font-size:12px;color:#000;font-weight:normal;font-family:'Liberation Sans',sans-serif;transform:scaleX(0.93) translateX(-50%);">Оборудование</div>
<div class="t" style="left:1117px;top:78.8px;font-size:12px;color:#000;font-weight:normal;font-family:'Liberation Sans',sans-serif;transform:scaleX(0.93) translateX(-50%);">Доступ</div>
<div class="a" style="left:810px;top:93px;width:346px;height:386px;background:#fff;border:1px solid #d9d9d9"></div>
<div class="a" style="left:811px;top:73px;width:77px;height:22px;background:#fff;border:1px solid #d9d9d9;border-bottom:none"></div>
<div class="t" style="left:848px;top:77.8px;font-size:12px;color:#000;font-weight:normal;font-family:'Liberation Sans',sans-serif;transform:scaleX(0.93) translateX(-50%);">Общие</div>
<svg style="left:824px;top:114px" width="32" height="24"><path d="M4 10L18 5 31 11 31 16 17 22 3 16z" fill="#d8dcd8" stroke="#777" stroke-width="0.8"/><path d="M3 16L17 22 31 16 31 19 17 24 3 19z" fill="#4a7a60"/><rect x="1" y="1" width="6" height="6" fill="#e85a20"/><rect x="8" y="1" width="6" height="6" fill="#60b030"/><rect x="1" y="8" width="6" height="6" fill="#2a80e0"/><rect x="8" y="8" width="6" height="6" fill="#f8c020"/></svg>
<div class="a" style="left:897px;top:113px;width:246px;height:23px;background:#fff;border:1px solid #7a7a7a;"></div>
<div class="a" style="left:824px;top:147px;width:317px;height:1px;background:#a0a0a0;"></div>
<div class="t" style="left:824px;top:157.8px;font-size:12px;color:#000;font-weight:normal;font-family:'Liberation Sans',sans-serif;transform:scaleX(0.92);">Тип:</div>
<div class="t" style="left:932px;top:157.8px;font-size:12px;color:#000;font-weight:normal;font-family:'Liberation Sans',sans-serif;transform:scaleX(0.92);">Локальный диск</div>
<div class="t" style="left:824px;top:178.8px;font-size:12px;color:#000;font-weight:normal;font-family:'Liberation Sans',sans-serif;transform:scaleX(0.92);">Файловая система:</div>
<div class="t" style="left:932px;top:178.8px;font-size:12px;color:#000;font-weight:normal;font-family:'Liberation Sans',sans-serif;transform:scaleX(0.92);">NTFS</div>
<div class="a" style="left:824px;top:199px;width:317px;height:1px;background:#a0a0a0;"></div>
<div class="a" style="left:824px;top:207px;width:15px;height:15px;background:#0000ff;"></div>
<div class="t" style="left:845px;top:207.8px;font-size:12px;color:#000;font-weight:normal;font-family:'Liberation Sans',sans-serif;transform:scaleX(0.92);">Занято:</div>
<div class="t" style="left:1045px;top:207.8px;font-size:12px;color:#000;font-weight:normal;font-family:'Liberation Sans',sans-serif;transform:scaleX(0.9) translateX(-100%);">33 903 656 960 байт</div>
<div class="t" style="left:1108px;top:207.8px;font-size:12px;color:#000;font-weight:normal;font-family:'Liberation Sans',sans-serif;transform:scaleX(0.9) translateX(-100%);">31,5 ГБ</div>
<div class="a" style="left:824px;top:228px;width:15px;height:15px;background:#ff00ff;"></div>
<div class="t" style="left:845px;top:228.8px;font-size:12px;color:#000;font-weight:normal;font-family:'Liberation Sans',sans-serif;transform:scaleX(0.92);">Свободно:</div>
<div class="t" style="left:1045px;top:228.8px;font-size:12px;color:#000;font-weight:normal;font-family:'Liberation Sans',sans-serif;transform:scaleX(0.9) translateX(-100%);">70 428 602 368 байт</div>
<div class="t" style="left:1108px;top:228.8px;font-size:12px;color:#000;font-weight:normal;font-family:'Liberation Sans',sans-serif;transform:scaleX(0.9) translateX(-100%);">65,5 ГБ</div>
<div class="a" style="left:824px;top:253px;width:317px;height:1px;background:#a0a0a0;"></div>
<div class="t" style="left:845px;top:262.8px;font-size:12px;color:#000;font-weight:normal;font-family:'Liberation Sans',sans-serif;transform:scaleX(0.92);">Емкость:</div>
<div class="t" style="left:1045px;top:262.8px;font-size:12px;color:#000;font-weight:normal;font-family:'Liberation Sans',sans-serif;transform:scaleX(0.9) translateX(-100%);">104 332 259 328 байт</div>
<div class="t" style="left:1108px;top:262.8px;font-size:12px;color:#000;font-weight:normal;font-family:'Liberation Sans',sans-serif;transform:scaleX(0.9) translateX(-100%);">97,1 ГБ</div>
<svg style="left:0;top:0" width="1" height="1"><path d="M1038.0,310.0 L1038.0,322.0 A61.5,26 0 0 1 915.0,322.0 L915.0,310.0 A61.5,26 0 0 0 1038.0,310.0Z" fill="#8b008b"/><ellipse cx="976.5" cy="310" rx="61.5" ry="26" fill="#ff00ff"/><path d="M976.5,310 L915.0,310.0 A61.5,26 0 0 1 1004.4,286.8Z" fill="#0000ff"/></svg>
<div class="t" style="left:981px;top:355.8px;font-size:12px;color:#000;font-weight:normal;font-family:'Liberation Sans',sans-serif;transform:scaleX(0.92) translateX(-50%);">Диск C:</div>
<div class="a" style="left:1054px;top:346px;width:88px;height:21px;background:#e1e1e1;border:1px solid #adadad;"></div>
<div class="t" style="left:1098.0px;top:350.8px;font-size:12px;color:#000;font-weight:normal;font-family:'Liberation Sans',sans-serif;transform:scaleX(0.92) translateX(-50%);">Очистка диска</div>
<div class="a" style="left:824px;top:373px;width:317px;height:1px;background:#a0a0a0;"></div>
<div class="a" style="left:824px;top:406px;width:13px;height:13px;background:#fff;border:1px solid #333;"></div>
<div class="t" style="left:840px;top:406.8px;font-size:12px;color:#000;font-weight:normal;font-family:'Liberation Sans',sans-serif;transform:scaleX(0.92);">Сжать этот диск для экономии места</div>
<div class="a" style="left:824px;top:429px;width:13px;height:13px;background:#fff;border:1px solid #333;"></div>
<svg style="left:824px;top:429px" width="13" height="13"><path d="M2.5 6.5l3 3 5-6" stroke="#222" stroke-width="1.4" fill="none"/></svg>
<div class="t" style="left:840px;top:428.8px;font-size:12px;color:#000;font-weight:normal;font-family:'Liberation Sans',sans-serif;transform:scaleX(0.92);">Разрешить индексировать содержимое файлов на этом</div>
<div class="t" style="left:840px;top:441.8px;font-size:12px;color:#000;font-weight:normal;font-family:'Liberation Sans',sans-serif;transform:scaleX(0.92);">диске в дополнение к свойствам файла</div>
<div class="a" style="left:922px;top:486px;width:73px;height:21px;background:#e1e1e1;border:1px solid #adadad;"></div>
<div class="t" style="left:958.5px;top:490.8px;font-size:12px;color:#000;font-weight:normal;font-family:'Liberation Sans',sans-serif;transform:scaleX(0.92) translateX(-50%);">OK</div>
<div class="a" style="left:1003px;top:486px;width:73px;height:21px;background:#e1e1e1;border:1px solid #adadad;"></div>
<div class="t" style="left:1039.5px;top:490.8px;font-size:12px;color:#000;font-weight:normal;font-family:'Liberation Sans',sans-serif;transform:scaleX(0.92) translateX(-50%);">Отмена</div>
<div class="a" style="left:1084px;top:486px;width:73px;height:21px;background:#cccccc;border:1px solid #bfbfbf;"></div>
<div class="t" style="left:1120.5px;top:490.8px;font-size:12px;color:#838383;font-weight:normal;font-family:'Liberation Sans',sans-serif;transform:scaleX(0.92) translateX(-50%);">Применить</div>
<div class="a" style="left:1193px;top:20px;width:360px;height:478px;background:#f0f0f0;border:1px solid #aebfd2;box-shadow:0 3px 12px rgba(0,0,0,.45)"></div>
<div class="a" style="left:1193px;top:20px;width:360px;height:29px;background:linear-gradient(#bccfe2,#b2c6dc);"></div>
<div class="a" style="left:1196px;top:27px;width:9px;height:13px;background:linear-gradient(#3aa0a8,#0a5060);border-radius:2px"></div>
<div class="t" style="left:1214px;top:27.8px;font-size:12px;color:#f4f8fc;font-weight:normal;font-family:'Liberation Sans',sans-serif;transform:scaleX(0.98);-webkit-text-stroke:0.35px currentColor;">Свойства: DVD RW дисковод (E:) Windows 7 Ultim x...</div>
<svg style="left:1533px;top:26px" width="12" height="12"><path d="M1 1L11 11M11 1L1 11" stroke="#eef4fa" stroke-width="1.3"/></svg>
<div class="a" style="left:1200px;top:58px;width:296px;height:19px;background:#f0f0f0;border:1px solid #d9d9d9"></div>
<div class="a" style="left:1249px;top:58px;width:1px;height:19px;background:#d9d9d9;"></div>
<div class="a" style="left:1332px;top:58px;width:1px;height:19px;background:#d9d9d9;"></div>
<div class="a" style="left:1382px;top:58px;width:1px;height:19px;background:#d9d9d9;"></div>
<div class="a" style="left:1449px;top:58px;width:1px;height:19px;background:#d9d9d9;"></div>
<div class="t" style="left:1290px;top:62.8px;font-size:12px;color:#000;font-weight:normal;font-family:'Liberation Sans',sans-serif;transform:scaleX(0.93) translateX(-50%);">Оборудование</div>
<div class="t" style="left:1357px;top:62.8px;font-size:12px;color:#000;font-weight:normal;font-family:'Liberation Sans',sans-serif;transform:scaleX(0.93) translateX(-50%);">Доступ</div>
<div class="t" style="left:1415px;top:62.8px;font-size:12px;color:#000;font-weight:normal;font-family:'Liberation Sans',sans-serif;transform:scaleX(0.93) translateX(-50%);">Настройка</div>
<div class="t" style="left:1472px;top:62.8px;font-size:12px;color:#000;font-weight:normal;font-family:'Liberation Sans',sans-serif;transform:scaleX(0.93) translateX(-50%);">Запись</div>
<div class="a" style="left:1200px;top:76px;width:346px;height:385px;background:#fff;border:1px solid #d9d9d9"></div>
<div class="a" style="left:1200px;top:56px;width:49px;height:22px;background:#fff;border:1px solid #d9d9d9;border-bottom:none"></div>
<div class="t" style="left:1224px;top:60.8px;font-size:12px;color:#000;font-weight:normal;font-family:'Liberation Sans',sans-serif;transform:scaleX(0.93) translateX(-50%);">Общие</div>
<div class="a" style="left:1287px;top:96px;width:246px;height:23px;background:#fff;border:1px solid #7a7a7a;"></div>
<div class="t" style="left:1290px;top:100.8px;font-size:12px;color:#000;font-weight:normal;font-family:'Liberation Sans',sans-serif;transform:scaleX(0.88);">Windows 7 Ultim x64 7DB by OVG</div>
<div class="a" style="left:1214px;top:130px;width:317px;height:1px;background:#a0a0a0;"></div>
<div class="t" style="left:1214px;top:140.8px;font-size:12px;color:#000;font-weight:normal;font-family:'Liberation Sans',sans-serif;transform:scaleX(0.92);">Тип:</div>
<div class="t" style="left:1321px;top:140.8px;font-size:12px;color:#000;font-weight:normal;font-family:'Liberation Sans',sans-serif;transform:scaleX(0.92);">CD-дисковод</div>
<div class="t" style="left:1214px;top:161.8px;font-size:12px;color:#000;font-weight:normal;font-family:'Liberation Sans',sans-serif;transform:scaleX(0.92);">Файловая система:</div>
<div class="t" style="left:1322px;top:161.8px;font-size:12px;color:#000;font-weight:normal;font-family:'Liberation Sans',sans-serif;transform:scaleX(0.92);">UDF</div>
<div class="a" style="left:1214px;top:182px;width:317px;height:1px;background:#a0a0a0;"></div>
<div class="a" style="left:1214px;top:190px;width:15px;height:15px;background:#0000ff;"></div>
<div class="t" style="left:1235px;top:190.8px;font-size:12px;color:#000;font-weight:normal;font-family:'Liberation Sans',sans-serif;transform:scaleX(0.92);">Занято:</div>
<div class="t" style="left:1434px;top:190.8px;font-size:12px;color:#000;font-weight:normal;font-family:'Liberation Sans',sans-serif;transform:scaleX(0.9) translateX(-100%);">4 220 354 560 байт</div>
<div class="t" style="left:1498px;top:190.8px;font-size:12px;color:#000;font-weight:normal;font-family:'Liberation Sans',sans-serif;transform:scaleX(0.9) translateX(-100%);">3,92 ГБ</div>
<div class="a" style="left:1214px;top:211px;width:15px;height:15px;background:#ff00ff;"></div>
<div class="t" style="left:1235px;top:211.8px;font-size:12px;color:#000;font-weight:normal;font-family:'Liberation Sans',sans-serif;transform:scaleX(0.92);">Свободно:</div>
<div class="t" style="left:1434px;top:211.8px;font-size:12px;color:#000;font-weight:normal;font-family:'Liberation Sans',sans-serif;transform:scaleX(0.9) translateX(-100%);">480 018 432 байт</div>
<div class="t" style="left:1498px;top:211.8px;font-size:12px;color:#000;font-weight:normal;font-family:'Liberation Sans',sans-serif;transform:scaleX(0.9) translateX(-100%);">457 МБ</div>
<div class="a" style="left:1214px;top:236px;width:317px;height:1px;background:#a0a0a0;"></div>
<div class="t" style="left:1235px;top:245.8px;font-size:12px;color:#000;font-weight:normal;font-family:'Liberation Sans',sans-serif;transform:scaleX(0.92);">Емкость:</div>
<div class="t" style="left:1434px;top:245.8px;font-size:12px;color:#000;font-weight:normal;font-family:'Liberation Sans',sans-serif;transform:scaleX(0.9) translateX(-100%);">4 700 372 992 байт</div>
<div class="t" style="left:1498px;top:245.8px;font-size:12px;color:#000;font-weight:normal;font-family:'Liberation Sans',sans-serif;transform:scaleX(0.9) translateX(-100%);">4,37 ГБ</div>
<svg style="left:0;top:0" width="1" height="1"><path d="M1428.0,293.0 L1428.0,305.0 A61.5,26 0 0 1 1305.0,305.0 L1305.0,293.0 A61.5,26 0 0 0 1428.0,293.0Z" fill="#8b008b"/><path d="M1428.0,293.0 L1428.0,305.0 A61.5,26 0 0 1 1317.2,320.5 L1317.2,308.5 A61.5,26 0 0 0 1428.0,293.0Z" fill="#00008b"/><ellipse cx="1366.5" cy="293" rx="61.5" ry="26" fill="#ff00ff"/><path d="M1366.5,293 L1305.0,293.0 A61.5,26 0 1 1 1317.2,308.5Z" fill="#0000ff"/></svg>
<div class="t" style="left:1371px;top:338.8px;font-size:12px;color:#000;font-weight:normal;font-family:'Liberation Sans',sans-serif;transform:scaleX(0.92) translateX(-50%);">Диск E:</div>
<div class="a" style="left:1214px;top:356px;width:317px;height:1px;background:#a0a0a0;"></div>
<div class="a" style="left:1312px;top:469px;width:73px;height:21px;background:#e1e1e1;border:1px solid #adadad;"></div>
<div class="t" style="left:1348.5px;top:473.8px;font-size:12px;color:#000;font-weight:normal;font-family:'Liberation Sans',sans-serif;transform:scaleX(0.92) translateX(-50%);">OK</div>
<div class="a" style="left:1393px;top:469px;width:73px;height:21px;background:#e1e1e1;border:1px solid #adadad;"></div>
<div class="t" style="left:1429.5px;top:473.8px;font-size:12px;color:#000;font-weight:normal;font-family:'Liberation Sans',sans-serif;transform:scaleX(0.92) translateX(-50%);">Отмена</div>
<div class="a" style="left:1474px;top:469px;width:73px;height:21px;background:#cccccc;border:1px solid #bfbfbf;"></div>
<div class="t" style="left:1510.5px;top:473.8px;font-size:12px;color:#838383;font-weight:normal;font-family:'Liberation Sans',sans-serif;transform:scaleX(0.92) translateX(-50%);">Применить</div>
<div class="a" style="left:88px;top:375px;width:451px;height:449px;background:#f0f0f0;border:1px solid #aebfd2;box-shadow:0 3px 12px rgba(0,0,0,.45)"></div>
<div class="a" style="left:88px;top:375px;width:451px;height:29px;background:linear-gradient(#bccfe2,#b2c6dc);"></div>
<svg style="left:89px;top:381px" width="17" height="16"><rect x="1" y="1" width="14" height="10" fill="#111" stroke="#333"/><path d="M2 8l3-3 2 2 3-4 3 3" stroke="#4c4" fill="none"/><rect x="5" y="12" width="6" height="2" fill="#222"/></svg>
<div class="t" style="left:110px;top:382.8px;font-size:12px;color:#f4f8fc;font-weight:normal;font-family:'Liberation Sans',sans-serif;transform:scaleX(1.0);-webkit-text-stroke:0.35px currentColor;">Диспетчер задач Windows</div>
<div class="a" style="left:437px;top:389px;width:10px;height:1px;background:#eef4fa;"></div>
<div class="a" style="left:478px;top:384px;width:10px;height:10px;background:none;border:1px solid #eef4fa;"></div>
<svg style="left:518px;top:383px" width="12" height="12"><path d="M1 1L11 11M11 1L1 11" stroke="#eef4fa" stroke-width="1.3"/></svg>
<div class="a" style="left:89px;top:404px;width:449px;height:20px;background:#fff;"></div>
<div class="t" style="left:96px;top:407.8px;font-size:12px;color:#6d6d6d;font-weight:normal;font-family:'Liberation Sans',sans-serif;transform:scaleX(1.0);">Файл</div>
<div class="t" style="left:139px;top:407.8px;font-size:12px;color:#6d6d6d;font-weight:normal;font-family:'Liberation Sans',sans-serif;transform:scaleX(1.0);">Параметры</div>
<div class="t" style="left:217px;top:407.8px;font-size:12px;color:#6d6d6d;font-weight:normal;font-family:'Liberation Sans',sans-serif;transform:scaleX(1.0);">Вид</div>
<div class="t" style="left:251px;top:407.8px;font-size:12px;color:#6d6d6d;font-weight:normal;font-family:'Liberation Sans',sans-serif;transform:scaleX(1.0);">Справка</div>
<div class="a" style="left:96px;top:431px;width:414px;height:18px;background:#f0f0f0;border:1px solid #d9d9d9"></div>
<div class="a" style="left:171px;top:431px;width:1px;height:18px;background:#d9d9d9;"></div>
<div class="a" style="left:236px;top:431px;width:1px;height:18px;background:#d9d9d9;"></div>
<div class="a" style="left:287px;top:431px;width:1px;height:18px;background:#d9d9d9;"></div>
<div class="a" style="left:386px;top:431px;width:1px;height:18px;background:#d9d9d9;"></div>
<div class="a" style="left:426px;top:431px;width:1px;height:18px;background:#d9d9d9;"></div>
<div class="t" style="left:133.5px;top:434.8px;font-size:12px;color:#000;font-weight:normal;font-family:'Liberation Sans',sans-serif;transform:scaleX(0.92) translateX(-50%);">Приложения</div>
<div class="t" style="left:203.5px;top:434.8px;font-size:12px;color:#000;font-weight:normal;font-family:'Liberation Sans',sans-serif;transform:scaleX(0.92) translateX(-50%);">Процессы</div>
<div class="t" style="left:261.5px;top:434.8px;font-size:12px;color:#000;font-weight:normal;font-family:'Liberation Sans',sans-serif;transform:scaleX(0.92) translateX(-50%);">Службы</div>
<div class="t" style="left:406px;top:434.8px;font-size:12px;color:#000;font-weight:normal;font-family:'Liberation Sans',sans-serif;transform:scaleX(0.92) translateX(-50%);">Сеть</div>
<div class="t" style="left:468px;top:434.8px;font-size:12px;color:#000;font-weight:normal;font-family:'Liberation Sans',sans-serif;transform:scaleX(0.92) translateX(-50%);">Пользователи</div>
<div class="a" style="left:95px;top:448px;width:438px;height:349px;background:#fff;border:1px solid #d9d9d9"></div>
<div class="a" style="left:287px;top:429px;width:100px;height:21px;background:#fff;border:1px solid #d9d9d9;border-bottom:none"></div>
<div class="t" style="left:336.5px;top:432.8px;font-size:12px;color:#000;font-weight:normal;font-family:'Liberation Sans',sans-serif;transform:scaleX(0.92) translateX(-50%);">Быстродействие</div>
<div class="a" style="left:111px;top:466px;width:88px;height:78px;background:none;border:1px solid #dcdcdc;"></div>
<div class="a" style="left:116px;top:464px;width:69.8135px;height:5px;background:#fff;"></div>
<div class="t" style="left:119px;top:459.8px;font-size:12px;color:#000;font-weight:normal;font-family:'Liberation Sans',sans-serif;transform:scaleX(0.92);">Загрузка ЦП</div>
<div class="a" style="left:119px;top:476px;width:70px;height:61px;background:#000;border:1px solid #444"></div>
<div class="a" style="left:143px;top:481px;width:25px;height:37px;background:linear-gradient(90deg,#1a1a1a 0%,#5a5a5a 12%,#3a3a3a 50%,#0a0a0a 100%);"></div>
<div class="a" style="left:143px;top:485px;width:25px;height:1px;background:linear-gradient(90deg,#666,#bbb 15%,#888 60%,#222);"></div>
<div class="a" style="left:143px;top:490px;width:25px;height:1px;background:linear-gradient(90deg,#666,#bbb 15%,#888 60%,#222);"></div>
<div class="a" style="left:143px;top:495px;width:25px;height:1px;background:linear-gradient(90deg,#666,#bbb 15%,#888 60%,#222);"></div>
<div class="a" style="left:143px;top:500px;width:25px;height:1px;background:linear-gradient(90deg,#666,#bbb 15%,#888 60%,#222);"></div>
<div class="a" style="left:143px;top:505px;width:25px;height:1px;background:linear-gradient(90deg,#666,#bbb 15%,#888 60%,#222);"></div>
<div class="a" style="left:143px;top:510px;width:25px;height:1px;background:linear-gradient(90deg,#666,#bbb 15%,#888 60%,#222);"></div>
<div class="a" style="left:143px;top:515px;width:25px;height:1px;background:linear-gradient(90deg,#666,#bbb 15%,#888 60%,#222);"></div>
<div class="a" style="left:143px;top:520px;width:25px;height:1px;background:linear-gradient(90deg,#666,#bbb 15%,#888 60%,#222);"></div>
<div class="a" style="left:143px;top:517px;width:25px;height:2px;background:#40c040;"></div>
<div class="t" style="left:155.0px;top:520.8px;font-size:12px;color:#3cb83c;font-weight:normal;font-family:'Liberation Sans',sans-serif;transform:scaleX(0.9) translateX(-50%);">1 %</div>
<div class="a" style="left:216px;top:466px;width:301px;height:78px;background:none;border:1px solid #dcdcdc;"></div>
<div class="a" style="left:221px;top:464px;width:131.571375px;height:5px;background:#fff;"></div>
<div class="t" style="left:224px;top:459.8px;font-size:12px;color:#000;font-weight:normal;font-family:'Liberation Sans',sans-serif;transform:scaleX(0.92);">Хронология загрузки ЦП</div>
<svg style="left:224px;top:476px" width="66" height="61" shape-rendering="crispEdges"><rect width="66" height="61" fill="#000"/><path d="M5.5,0V61M17.5,0V61M29.5,0V61M41.5,0V61M53.5,0V61M65.5,0V61M0,0.5H66M0,12.5H66M0,24.5H66M0,36.5H66M0,48.5H66M0,60.5H66" stroke="#008048" stroke-width="1"/><polyline points="0,53.0 2,52.3 4,58.7 6,49.5 8,56.7 10,59.5 12,49.5 14,51.8 16,51.9 18,59.5 20,50.6 22,58.7 24,52.4 26,59.1 28,59.5 30,50.9 32,59.5 34,48.4 36,49.9 38,48.3 40,59.5 42,57.9 44,47.9 46,52.0 48,53.4 50,55.3 52,52.5 54,59.5 56,48.4 58,59.5 60,59.5 62,57.5 64,59.5 66,59.5" fill="none" stroke="#00ff00" stroke-width="1" shape-rendering="geometricPrecision"/></svg>
<div class="a" style="left:223px;top:475px;width:67px;height:2px;background:#7a7a7a;"></div>
<div class="a" style="left:223px;top:475px;width:2px;height:62px;background:#7a7a7a;"></div>
<svg style="left:296px;top:476px" width="66" height="61" shape-rendering="crispEdges"><rect width="66" height="61" fill="#000"/><path d="M5.5,0V61M17.5,0V61M29.5,0V61M41.5,0V61M53.5,0V61M65.5,0V61M0,0.5H66M0,12.5H66M0,24.5H66M0,36.5H66M0,48.5H66M0,60.5H66" stroke="#008048" stroke-width="1"/><polyline points="0,59.0 2,59.5 4,59.2 6,59.5 8,59.5 10,59.5 12,59.5 14,56.8 16,58.6 18,58.4 20,59.5 22,59.5 24,59.5 26,59.5 28,58.0 30,59.5 32,59.5 34,59.5 36,59.5 38,56.5 40,59.5 42,59.5 44,57.1 46,54.8 48,59.5 50,59.5 52,59.5 54,59.5 56,59.5 58,59.5 60,59.5 62,59.5 64,59.5 66,59.5" fill="none" stroke="#00ff00" stroke-width="1" shape-rendering="geometricPrecision"/></svg>
<div class="a" style="left:295px;top:475px;width:67px;height:2px;background:#7a7a7a;"></div>
<div class="a" style="left:295px;top:475px;width:2px;height:62px;background:#7a7a7a;"></div>
<svg style="left:368px;top:476px" width="66" height="61" shape-rendering="crispEdges"><rect width="66" height="61" fill="#000"/><path d="M5.5,0V61M17.5,0V61M29.5,0V61M41.5,0V61M53.5,0V61M65.5,0V61M0,0.5H66M0,12.5H66M0,24.5H66M0,36.5H66M0,48.5H66M0,60.5H66" stroke="#008048" stroke-width="1"/><polyline points="0,59.5 2,59.5 4,59.5 6,59.5 8,59.5 10,59.5 12,58.6 14,59.5 16,59.5 18,59.5 20,58.6 22,58.4 24,59.5 26,59.1 28,57.7 30,59.5 32,57.9 34,58.3 36,59.5 38,59.5 40,59.1 42,59.5 44,59.5 46,57.6 48,59.5 50,59.5 52,57.6 54,59.5 56,59.5 58,59.5 60,58.8 62,59.2 64,58.9 66,59.5" fill="none" stroke="#00ff00" stroke-width="1" shape-rendering="geometricPrecision"/></svg>
<div class="a" style="left:367px;top:475px;width:67px;height:2px;background:#7a7a7a;"></div>
<div class="a" style="left:367px;top:475px;width:2px;height:62px;background:#7a7a7a;"></div>
<svg style="left:440px;top:476px" width="66" height="61" shape-rendering="crispEdges"><rect width="66" height="61" fill="#000"/><path d="M5.5,0V61M17.5,0V61M29.5,0V61M41.5,0V61M53.5,0V61M65.5,0V61M0,0.5H66M0,12.5H66M0,24.5H66M0,36.5H66M0,48.5H66M0,60.5H66" stroke="#008048" stroke-width="1"/><polyline points="0,59.5 2,59.5 4,59.5 6,59.5 8,52.9 10,59.5 12,59.5 14,59.5 16,59.5 18,59.5 20,59.5 22,59.5 24,59.5 26,59.5 28,59.5 30,54.0 32,59.5 34,59.5 36,59.5 38,59.5 40,59.5 42,59.5 44,51.5 46,59.5 48,59.5 50,57.5 52,59.5 54,59.5 56,59.5 58,59.5 60,52.9 62,59.5 64,59.5 66,59.5" fill="none" stroke="#00ff00" stroke-width="1" shape-rendering="geometricPrecision"/></svg>
<div class="a" style="left:439px;top:475px;width:67px;height:2px;background:#7a7a7a;"></div>
<div class="a" style="left:439px;top:475px;width:2px;height:62px;background:#7a7a7a;"></div>
<div class="a" style="left:111px;top:558px;width:88px;height:79px;background:none;border:1px solid #dcdcdc;"></div>
<div class="a" style="left:116px;top:556px;width:44.451687500000006px;height:5px;background:#fff;"></div>
<div class="t" style="left:119px;top:551.8px;font-size:12px;color:#000;font-weight:normal;font-family:'Liberation Sans',sans-serif;transform:scaleX(0.92);">Память</div>
<div class="a" style="left:119px;top:568px;width:70px;height:61px;background:#000;border:1px solid #444"></div>
<div class="a" style="left:143px;top:573px;width:25px;height:37px;background:linear-gradient(90deg,#1a1a1a 0%,#5a5a5a 12%,#3a3a3a 50%,#0a0a0a 100%);"></div>
<div class="a" style="left:143px;top:577px;width:25px;height:1px;background:linear-gradient(90deg,#666,#bbb 15%,#888 60%,#222);"></div>
<div class="a" style="left:143px;top:582px;width:25px;height:1px;background:linear-gradient(90deg,#666,#bbb 15%,#888 60%,#222);"></div>
<div class="a" style="left:143px;top:587px;width:25px;height:1px;background:linear-gradient(90deg,#666,#bbb 15%,#888 60%,#222);"></div>
<div class="a" style="left:143px;top:592px;width:25px;height:1px;background:linear-gradient(90deg,#666,#bbb 15%,#888 60%,#222);"></div>
<div class="a" style="left:143px;top:597px;width:25px;height:1px;background:linear-gradient(90deg,#666,#bbb 15%,#888 60%,#222);"></div>
<div class="a" style="left:143px;top:602px;width:25px;height:1px;background:linear-gradient(90deg,#666,#bbb 15%,#888 60%,#222);"></div>
<div class="a" style="left:143px;top:607px;width:25px;height:1px;background:linear-gradient(90deg,#666,#bbb 15%,#888 60%,#222);"></div>
<div class="a" style="left:143px;top:612px;width:25px;height:1px;background:linear-gradient(90deg,#666,#bbb 15%,#888 60%,#222);"></div>
<div class="a" style="left:143px;top:609px;width:25px;height:2px;background:#40c040;"></div>
<div class="t" style="left:155.0px;top:612.8px;font-size:12px;color:#3cb83c;font-weight:normal;font-family:'Liberation Sans',sans-serif;transform:scaleX(0.9) translateX(-50%);">1,20 ГБ</div>
<div class="a" style="left:216px;top:558px;width:301px;height:79px;background:none;border:1px solid #dcdcdc;"></div>
<div class="a" style="left:221px;top:556px;width:250.7315px;height:5px;background:#fff;"></div>
<div class="t" style="left:224px;top:551.8px;font-size:12px;color:#000;font-weight:normal;font-family:'Liberation Sans',sans-serif;transform:scaleX(0.92);">Хронология использования физической памяти</div>
<svg style="left:224px;top:568px" width="285" height="61" shape-rendering="crispEdges"><rect width="285" height="61" fill="#000"/><path d="M5.5,0V61M17.5,0V61M29.5,0V61M41.5,0V61M53.5,0V61M65.5,0V61M77.5,0V61M89.5,0V61M101.5,0V61M113.5,0V61M125.5,0V61M137.5,0V61M149.5,0V61M161.5,0V61M173.5,0V61M185.5,0V61M197.5,0V61M209.5,0V61M221.5,0V61M233.5,0V61M245.5,0V61M257.5,0V61M269.5,0V61M281.5,0V61M0,0.5H285M0,12.5H285M0,24.5H285M0,36.5H285M0,48.5H285M0,60.5H285" stroke="#008048" stroke-width="1"/><path d="M190,53H285" stroke="#3a7ae8" stroke-width="2"/></svg>
<div class="a" style="left:223px;top:567px;width:286px;height:2px;background:#7a7a7a;"></div>
<div class="a" style="left:223px;top:567px;width:2px;height:62px;background:#7a7a7a;"></div>
<div class="a" style="left:111px;top:651px;width:168px;height:71px;background:none;border:1px solid #dcdcdc;"></div>
<div class="a" style="left:117px;top:649px;width:132.8176875px;height:5px;background:#fff;"></div>
<div class="t" style="left:120px;top:644.8px;font-size:12px;color:#000;font-weight:normal;font-family:'Liberation Sans',sans-serif;transform:scaleX(0.92);">Физическая память (МБ)</div>
<div class="t" style="left:120px;top:661.8px;font-size:12px;color:#000;font-weight:normal;font-family:'Liberation Sans',sans-serif;transform:scaleX(0.92);">Всего</div>
<div class="t" style="left:273px;top:661.8px;font-size:12px;color:#000;font-weight:normal;font-family:'Liberation Sans',sans-serif;transform:scaleX(0.92) translateX(-100%);">8130</div>
<div class="t" style="left:120px;top:676.3px;font-size:12px;color:#000;font-weight:normal;font-family:'Liberation Sans',sans-serif;transform:scaleX(0.92);">Кэшировано</div>
<div class="t" style="left:273px;top:676.3px;font-size:12px;color:#000;font-weight:normal;font-family:'Liberation Sans',sans-serif;transform:scaleX(0.92) translateX(-100%);">707</div>
<div class="t" style="left:120px;top:690.8px;font-size:12px;color:#000;font-weight:normal;font-family:'Liberation Sans',sans-serif;transform:scaleX(0.92);">Доступно</div>
<div class="t" style="left:273px;top:690.8px;font-size:12px;color:#000;font-weight:normal;font-family:'Liberation Sans',sans-serif;transform:scaleX(0.92) translateX(-100%);">6895</div>
<div class="t" style="left:120px;top:705.3px;font-size:12px;color:#000;font-weight:normal;font-family:'Liberation Sans',sans-serif;transform:scaleX(0.92);">Свободно</div>
<div class="t" style="left:273px;top:705.3px;font-size:12px;color:#000;font-weight:normal;font-family:'Liberation Sans',sans-serif;transform:scaleX(0.92) translateX(-100%);">6265</div>
<div class="a" style="left:111px;top:737px;width:168px;height:41px;background:none;border:1px solid #dcdcdc;"></div>
<div class="a" style="left:117px;top:735px;width:99.08243750000001px;height:5px;background:#fff;"></div>
<div class="t" style="left:120px;top:730.8px;font-size:12px;color:#000;font-weight:normal;font-family:'Liberation Sans',sans-serif;transform:scaleX(0.92);">Память ядра (МБ)</div>
<div class="t" style="left:120px;top:747.8px;font-size:12px;color:#000;font-weight:normal;font-family:'Liberation Sans',sans-serif;transform:scaleX(0.92);">Выгружаемая</div>
<div class="t" style="left:273px;top:747.8px;font-size:12px;color:#000;font-weight:normal;font-family:'Liberation Sans',sans-serif;transform:scaleX(0.92) translateX(-100%);">166</div>
<div class="t" style="left:120px;top:762.4px;font-size:12px;color:#000;font-weight:normal;font-family:'Liberation Sans',sans-serif;transform:scaleX(0.92);">Невыгружаемая</div>
<div class="t" style="left:273px;top:762.4px;font-size:12px;color:#000;font-weight:normal;font-family:'Liberation Sans',sans-serif;transform:scaleX(0.92) translateX(-100%);">122</div>
<div class="a" style="left:294px;top:651px;width:169px;height:89px;background:none;border:1px solid #dcdcdc;"></div>
<div class="a" style="left:299px;top:649px;width:50.461875px;height:5px;background:#fff;"></div>
<div class="t" style="left:302px;top:644.8px;font-size:12px;color:#000;font-weight:normal;font-family:'Liberation Sans',sans-serif;transform:scaleX(0.92);">Система</div>
<div class="t" style="left:302px;top:661.8px;font-size:12px;color:#000;font-weight:normal;font-family:'Liberation Sans',sans-serif;transform:scaleX(0.92);">Дескрипторов</div>
<div class="t" style="left:457px;top:661.8px;font-size:12px;color:#000;font-weight:normal;font-family:'Liberation Sans',sans-serif;transform:scaleX(0.92) translateX(-100%);">11690</div>
<div class="t" style="left:302px;top:676.3px;font-size:12px;color:#000;font-weight:normal;font-family:'Liberation Sans',sans-serif;transform:scaleX(0.92);">Потоков</div>
<div class="t" style="left:457px;top:676.3px;font-size:12px;color:#000;font-weight:normal;font-family:'Liberation Sans',sans-serif;transform:scaleX(0.92) translateX(-100%);">542</div>
<div class="t" style="left:302px;top:690.8px;font-size:12px;color:#000;font-weight:normal;font-family:'Liberation Sans',sans-serif;transform:scaleX(0.92);">Процессов</div>
<div class="t" style="left:457px;top:690.8px;font-size:12px;color:#000;font-weight:normal;font-family:'Liberation Sans',sans-serif;transform:scaleX(0.92) translateX(-100%);">35</div>
<div class="t" style="left:302px;top:705.3px;font-size:12px;color:#000;font-weight:normal;font-family:'Liberation Sans',sans-serif;transform:scaleX(0.92);">Время работы</div>
<div class="t" style="left:457px;top:705.3px;font-size:12px;color:#000;font-weight:normal;font-family:'Liberation Sans',sans-serif;transform:scaleX(0.92) translateX(-100%);">0:00:12:20</div>
<div class="t" style="left:302px;top:719.8px;font-size:12px;color:#000;font-weight:normal;font-family:'Liberation Sans',sans-serif;transform:scaleX(0.92);">Выделено (ГБ)</div>
<div class="t" style="left:457px;top:719.8px;font-size:12px;color:#000;font-weight:normal;font-family:'Liberation Sans',sans-serif;transform:scaleX(0.92) translateX(-100%);">1 / 15</div>
<div class="a" style="left:294px;top:758px;width:169px;height:21px;background:#e1e1e1;border:1px solid #adadad;"></div>
<div class="t" style="left:378.5px;top:762.8px;font-size:12px;color:#000;font-weight:normal;font-family:'Liberation Sans',sans-serif;transform:scaleX(0.92) translateX(-50%);">Монитор ресурсов...</div>
<div class="a" style="left:89px;top:801px;width:449px;height:22px;background:#f0f0f0;border-top:1px solid #e0e0e0"></div>
<div class="a" style="left:193px;top:803px;width:1px;height:19px;background:#d9d9d9;"></div>
<div class="a" style="left:324px;top:803px;width:1px;height:19px;background:#d9d9d9;"></div>
<div class="t" style="left:91px;top:807.8px;font-size:12px;color:#000;font-weight:normal;font-family:'Liberation Sans',sans-serif;transform:scaleX(0.98);">Процессов: 35</div>
<div class="t" style="left:198px;top:807.8px;font-size:12px;color:#000;font-weight:normal;font-family:'Liberation Sans',sans-serif;transform:scaleX(0.98);">Загрузка ЦП: 1%</div>
<div class="t" style="left:329px;top:807.8px;font-size:12px;color:#000;font-weight:normal;font-family:'Liberation Sans',sans-serif;transform:scaleX(0.98);">Физическая память: 15%</div>
<div class="a" style="left:579px;top:528px;width:785px;height:476px;background:#f0f0f0;border:1px solid #1a7ad8;box-shadow:0 3px 14px rgba(0,0,0,.5)"></div>
<div class="a" style="left:579px;top:528px;width:785px;height:30px;background:#0b78d7;"></div>
<svg style="left:581px;top:535px" width="17" height="17"><circle cx="8.5" cy="8.5" r="7.5" fill="#f4f0ec" stroke="#b8b0a8" stroke-width="1.2"/><path d="M4 6a5 5 0 0 1 7-2" stroke="#c06a50" stroke-width="1.2" fill="none"/><path d="M5 4l4.5 5.5 1.5-3" stroke="#6a1010" stroke-width="1.6" fill="none"/></svg>
<div class="t" style="left:601px;top:537.8px;font-size:12px;color:#dff4ff;font-weight:normal;font-family:'Liberation Sans',sans-serif;transform:scaleX(1.0);-webkit-text-stroke:0.35px currentColor;">Монитор ресурсов</div>
<div class="a" style="left:1262px;top:543px;width:11px;height:1.5px;background:#bff0ff;"></div>
<div class="a" style="left:1302px;top:537px;width:11px;height:11px;background:none;border:1px solid #bff0ff;"></div>
<svg style="left:1342px;top:536px" width="12" height="12"><path d="M1 1L11 11M11 1L1 11" stroke="#bff0ff" stroke-width="1.4"/></svg>
<div class="a" style="left:580px;top:558px;width:783px;height:20px;background:#fff;"></div>
<div class="t" style="left:587px;top:561.8px;font-size:12px;color:#000;font-weight:normal;font-family:'Liberation Sans',sans-serif;transform:scaleX(1.0);">Файл</div>
<div class="t" style="left:630px;top:561.8px;font-size:12px;color:#000;font-weight:normal;font-family:'Liberation Sans',sans-serif;transform:scaleX(1.0);">Монитор</div>
<div class="t" style="left:695px;top:561.8px;font-size:12px;color:#000;font-weight:normal;font-family:'Liberation Sans',sans-serif;transform:scaleX(1.0);">Справка</div>
<div class="a" style="left:583px;top:582px;width:242px;height:21px;background:#f0f0f0;border:1px solid #d9d9d9"></div>
<div class="a" style="left:630px;top:582px;width:1px;height:21px;background:#d9d9d9;"></div>
<div class="a" style="left:677px;top:582px;width:1px;height:21px;background:#d9d9d9;"></div>
<div class="a" style="left:733px;top:582px;width:1px;height:21px;background:#d9d9d9;"></div>
<div class="a" style="left:779px;top:582px;width:1px;height:21px;background:#d9d9d9;"></div>
<div class="t" style="left:606px;top:586.8px;font-size:12px;color:#000;font-weight:normal;font-family:'Liberation Sans',sans-serif;transform:scaleX(1.0) translateX(-50%);">Обзор</div>
<div class="t" style="left:646px;top:586.8px;font-size:12px;color:#000;font-weight:normal;font-family:'Liberation Sans',sans-serif;transform:scaleX(1.0) translateX(-50%);">ЦП</div>
<div class="t" style="left:751px;top:586.8px;font-size:12px;color:#000;font-weight:normal;font-family:'Liberation Sans',sans-serif;transform:scaleX(1.0) translateX(-50%);">Диск</div>
<div class="t" style="left:799px;top:586.8px;font-size:12px;color:#000;font-weight:normal;font-family:'Liberation Sans',sans-serif;transform:scaleX(1.0) translateX(-50%);">Сеть</div>
<div class="a" style="left:677px;top:580px;width:56px;height:24px;background:#fff;border:1px solid #d9d9d9;border-bottom:none"></div>
<div class="t" style="left:705px;top:584.8px;font-size:12px;color:#000;font-weight:normal;font-family:'Liberation Sans',sans-serif;transform:scaleX(1.0) translateX(-50%);">Память</div>
<div class="a" style="left:580px;top:603px;width:783px;height:1px;background:#d9d9d9;"></div>
<div class="a" style="left:580px;top:606px;width:783px;height:1px;background:#e6e6e6;"></div>
<div class="a" style="left:581px;top:611px;width:541px;height:178px;background:#fff;border:1px solid #8a8a8a"></div>
<div class="a" style="left:581px;top:611px;width:541px;height:29px;background:linear-gradient(#e4e4e4,#c8c8c8 45%,#a8a8a8);border:1px solid #8a8a8a"></div>
<div class="t" style="left:588px;top:619.0px;font-size:13px;color:#f4f4f4;font-weight:normal;font-family:'Liberation Sans',sans-serif;transform:scaleX(0.99);">Процессы</div>
<div class="a" style="left:733px;top:618px;width:11px;height:12px;background:#108010;border:1px solid #0a400a"></div>
<div class="t" style="left:750px;top:618.8px;font-size:12px;color:#f0f0f0;font-weight:normal;font-family:'Liberation Sans',sans-serif;transform:scaleX(0.95);">Использование физической памяти: 14%</div>
<svg style="left:1091px;top:615px" width="20" height="20"><circle cx="10" cy="10" r="9" fill="#f4f4f4" stroke="#777" stroke-width="1"/><path d="M6 12l4-4 4 4" stroke="#111" stroke-width="1.8" fill="none"/></svg>
<div class="a" style="left:586px;top:645px;width:13px;height:13px;background:#fff;border:1px solid #333;"></div>
<div class="t" style="left:605px;top:645.8px;font-size:12px;color:#000;font-weight:normal;font-family:'Liberation Sans',sans-serif;transform:scaleX(0.92);">Образ</div>
<div class="t" style="left:768px;top:645.8px;font-size:12px;color:#000;font-weight:normal;font-family:'Liberation Sans',sans-serif;transform:scaleX(0.92);">ИД п...</div>
<div class="t" style="left:818px;top:645.8px;font-size:12px;color:#000;font-weight:normal;font-family:'Liberation Sans',sans-serif;transform:scaleX(0.92);">Ошибо...</div>
<div class="t" style="left:884px;top:645.8px;font-size:12px;color:#000;font-weight:normal;font-family:'Liberation Sans',sans-serif;transform:scaleX(0.92);">Завер...</div>
<div class="t" style="left:940px;top:645.8px;font-size:12px;color:#000;font-weight:normal;font-family:'Liberation Sans',sans-serif;transform:scaleX(0.92);">Рабоч...</div>
<div class="t" style="left:999px;top:645.8px;font-size:12px;color:#000;font-weight:normal;font-family:'Liberation Sans',sans-serif;transform:scaleX(0.92);">Общи...</div>
<div class="t" style="left:1059px;top:645.8px;font-size:12px;color:#000;font-weight:normal;font-family:'Liberation Sans',sans-serif;transform:scaleX(0.92);">Частн...</div>
<div class="a" style="left:761px;top:641px;width:1px;height:144px;background:#eeeeee;"></div>
<div class="a" style="left:811px;top:641px;width:1px;height:144px;background:#eeeeee;"></div>
<div class="a" style="left:871px;top:641px;width:1px;height:144px;background:#eeeeee;"></div>
<div class="a" style="left:929px;top:641px;width:1px;height:144px;background:#eeeeee;"></div>
<div class="a" style="left:988px;top:641px;width:1px;height:144px;background:#eeeeee;"></div>
<div class="a" style="left:1046px;top:641px;width:1px;height:144px;background:#eeeeee;"></div>
<svg style="left:1071px;top:641px" width="8" height="5"><path d="M0.5 0.5l3.5 3.5 3.5-3.5" stroke="#999" fill="none"/></svg>
<div class="a" style="left:582px;top:682px;width:523px;height:17px;background:#e5f3fb;"></div>
<div class="a" style="left:586px;top:666px;width:13px;height:13px;background:#fff;border:1px solid #333;"></div>
<div class="t" style="left:604px;top:666.8px;font-size:12px;color:#000;font-weight:normal;font-family:'Liberation Sans',sans-serif;transform:scaleX(0.9);">svchost.exe (LocalSystemNet...</div>
<div class="t" style="left:768px;top:666.8px;font-size:12px;color:#000;font-weight:normal;font-family:'Liberation Sans',sans-serif;transform:scaleX(0.92);">964</div>
<div class="t" style="left:863px;top:666.8px;font-size:12px;color:#000;font-weight:normal;font-family:'Liberation Sans',sans-serif;transform:scaleX(0.92) translateX(-100%);">0</div>
<div class="t" style="left:921px;top:666.8px;font-size:12px;color:#000;font-weight:normal;font-family:'Liberation Sans',sans-serif;transform:scaleX(0.92) translateX(-100%);">83 044</div>
<div class="t" style="left:980px;top:666.8px;font-size:12px;color:#000;font-weight:normal;font-family:'Liberation Sans',sans-serif;transform:scaleX(0.92) translateX(-100%);">87 124</div>
<div class="t" style="left:1038px;top:666.8px;font-size:12px;color:#000;font-weight:normal;font-family:'Liberation Sans',sans-serif;transform:scaleX(0.92) translateX(-100%);">9 036</div>
<div class="t" style="left:1096px;top:666.8px;font-size:12px;color:#000;font-weight:normal;font-family:'Liberation Sans',sans-serif;transform:scaleX(0.92) translateX(-100%);">78 088</div>
<div class="a" style="left:586px;top:683px;width:13px;height:13px;background:#fff;border:1px solid #333;"></div>
<div class="t" style="left:604px;top:683.8px;font-size:12px;color:#000;font-weight:normal;font-family:'Liberation Sans',sans-serif;transform:scaleX(0.9);">sidebar.exe</div>
<div class="t" style="left:768px;top:683.8px;font-size:12px;color:#000;font-weight:normal;font-family:'Liberation Sans',sans-serif;transform:scaleX(0.92);">1980</div>
<div class="t" style="left:863px;top:683.8px;font-size:12px;color:#000;font-weight:normal;font-family:'Liberation Sans',sans-serif;transform:scaleX(0.92) translateX(-100%);">0</div>
<div class="t" style="left:921px;top:683.8px;font-size:12px;color:#000;font-weight:normal;font-family:'Liberation Sans',sans-serif;transform:scaleX(0.92) translateX(-100%);">102 032</div>
<div class="t" style="left:980px;top:683.8px;font-size:12px;color:#000;font-weight:normal;font-family:'Liberation Sans',sans-serif;transform:scaleX(0.92) translateX(-100%);">108 544</div>
<div class="t" style="left:1038px;top:683.8px;font-size:12px;color:#000;font-weight:normal;font-family:'Liberation Sans',sans-serif;transform:scaleX(0.92) translateX(-100%);">48 540</div>
<div class="t" style="left:1096px;top:683.8px;font-size:12px;color:#000;font-weight:normal;font-family:'Liberation Sans',sans-serif;transform:scaleX(0.92) translateX(-100%);">60 004</div>
<div class="a" style="left:586px;top:700px;width:13px;height:13px;background:#fff;border:1px solid #333;"></div>
<div class="t" style="left:604px;top:700.8px;font-size:12px;color:#000;font-weight:normal;font-family:'Liberation Sans',sans-serif;transform:scaleX(0.9);">dwm.exe</div>
<div class="t" style="left:768px;top:700.8px;font-size:12px;color:#000;font-weight:normal;font-family:'Liberation Sans',sans-serif;transform:scaleX(0.92);">1236</div>
<div class="t" style="left:863px;top:700.8px;font-size:12px;color:#000;font-weight:normal;font-family:'Liberation Sans',sans-serif;transform:scaleX(0.92) translateX(-100%);">0</div>
<div class="t" style="left:921px;top:700.8px;font-size:12px;color:#000;font-weight:normal;font-family:'Liberation Sans',sans-serif;transform:scaleX(0.92) translateX(-100%);">46 204</div>
<div class="t" style="left:980px;top:700.8px;font-size:12px;color:#000;font-weight:normal;font-family:'Liberation Sans',sans-serif;transform:scaleX(0.92) translateX(-100%);">54 716</div>
<div class="t" style="left:1038px;top:700.8px;font-size:12px;color:#000;font-weight:normal;font-family:'Liberation Sans',sans-serif;transform:scaleX(0.92) translateX(-100%);">19 444</div>
<div class="t" style="left:1096px;top:700.8px;font-size:12px;color:#000;font-weight:normal;font-family:'Liberation Sans',sans-serif;transform:scaleX(0.92) translateX(-100%);">35 272</div>
<div class="a" style="left:586px;top:717px;width:13px;height:13px;background:#fff;border:1px solid #333;"></div>
<div class="t" style="left:604px;top:717.8px;font-size:12px;color:#000;font-weight:normal;font-family:'Liberation Sans',sans-serif;transform:scaleX(0.9);">explorer.exe</div>
<div class="t" style="left:768px;top:717.8px;font-size:12px;color:#000;font-weight:normal;font-family:'Liberation Sans',sans-serif;transform:scaleX(0.92);">1380</div>
<div class="t" style="left:863px;top:717.8px;font-size:12px;color:#000;font-weight:normal;font-family:'Liberation Sans',sans-serif;transform:scaleX(0.92) translateX(-100%);">0</div>
<div class="t" style="left:921px;top:717.8px;font-size:12px;color:#000;font-weight:normal;font-family:'Liberation Sans',sans-serif;transform:scaleX(0.92) translateX(-100%);">60 052</div>
<div class="t" style="left:980px;top:717.8px;font-size:12px;color:#000;font-weight:normal;font-family:'Liberation Sans',sans-serif;transform:scaleX(0.92) translateX(-100%);">66 320</div>
<div class="t" style="left:1038px;top:717.8px;font-size:12px;color:#000;font-weight:normal;font-family:'Liberation Sans',sans-serif;transform:scaleX(0.92) translateX(-100%);">37 068</div>
<div class="t" style="left:1096px;top:717.8px;font-size:12px;color:#000;font-weight:normal;font-family:'Liberation Sans',sans-serif;transform:scaleX(0.92) translateX(-100%);">29 252</div>
<div class="a" style="left:586px;top:734px;width:13px;height:13px;background:#fff;border:1px solid #333;"></div>
<div class="t" style="left:604px;top:734.8px;font-size:12px;color:#000;font-weight:normal;font-family:'Liberation Sans',sans-serif;transform:scaleX(0.9);">perfmon.exe</div>
<div class="t" style="left:768px;top:734.8px;font-size:12px;color:#000;font-weight:normal;font-family:'Liberation Sans',sans-serif;transform:scaleX(0.92);">2152</div>
<div class="t" style="left:863px;top:734.8px;font-size:12px;color:#000;font-weight:normal;font-family:'Liberation Sans',sans-serif;transform:scaleX(0.92) translateX(-100%);">0</div>
<div class="t" style="left:921px;top:734.8px;font-size:12px;color:#000;font-weight:normal;font-family:'Liberation Sans',sans-serif;transform:scaleX(0.92) translateX(-100%);">22 492</div>
<div class="t" style="left:980px;top:734.8px;font-size:12px;color:#000;font-weight:normal;font-family:'Liberation Sans',sans-serif;transform:scaleX(0.92) translateX(-100%);">29 764</div>
<div class="t" style="left:1038px;top:734.8px;font-size:12px;color:#000;font-weight:normal;font-family:'Liberation Sans',sans-serif;transform:scaleX(0.92) translateX(-100%);">11 296</div>
<div class="t" style="left:1096px;top:734.8px;font-size:12px;color:#000;font-weight:normal;font-family:'Liberation Sans',sans-serif;transform:scaleX(0.92) translateX(-100%);">18 468</div>
<div class="a" style="left:586px;top:751px;width:13px;height:13px;background:#fff;border:1px solid #333;"></div>
<div class="t" style="left:604px;top:751.8px;font-size:12px;color:#000;font-weight:normal;font-family:'Liberation Sans',sans-serif;transform:scaleX(0.9);">svchost.exe (secsvcs)</div>
<div class="t" style="left:768px;top:751.8px;font-size:12px;color:#000;font-weight:normal;font-family:'Liberation Sans',sans-serif;transform:scaleX(0.92);">2440</div>
<div class="t" style="left:863px;top:751.8px;font-size:12px;color:#000;font-weight:normal;font-family:'Liberation Sans',sans-serif;transform:scaleX(0.92) translateX(-100%);">0</div>
<div class="t" style="left:921px;top:751.8px;font-size:12px;color:#000;font-weight:normal;font-family:'Liberation Sans',sans-serif;transform:scaleX(0.92) translateX(-100%);">64 424</div>
<div class="t" style="left:980px;top:751.8px;font-size:12px;color:#000;font-weight:normal;font-family:'Liberation Sans',sans-serif;transform:scaleX(0.92) translateX(-100%);">21 948</div>
<div class="t" style="left:1038px;top:751.8px;font-size:12px;color:#000;font-weight:normal;font-family:'Liberation Sans',sans-serif;transform:scaleX(0.92) translateX(-100%);">7 040</div>
<div class="t" style="left:1096px;top:751.8px;font-size:12px;color:#000;font-weight:normal;font-family:'Liberation Sans',sans-serif;transform:scaleX(0.92) translateX(-100%);">14 908</div>
<div class="a" style="left:586px;top:768px;width:13px;height:13px;background:#fff;border:1px solid #333;"></div>
<div class="t" style="left:604px;top:768.8px;font-size:12px;color:#000;font-weight:normal;font-family:'Liberation Sans',sans-serif;transform:scaleX(0.9);">svchost.exe (netsvcs)</div>
<div class="t" style="left:768px;top:768.8px;font-size:12px;color:#000;font-weight:normal;font-family:'Liberation Sans',sans-serif;transform:scaleX(0.92);">340</div>
<div class="t" style="left:863px;top:768.8px;font-size:12px;color:#000;font-weight:normal;font-family:'Liberation Sans',sans-serif;transform:scaleX(0.92) translateX(-100%);">0</div>
<div class="t" style="left:921px;top:768.8px;font-size:12px;color:#000;font-weight:normal;font-family:'Liberation Sans',sans-serif;transform:scaleX(0.92) translateX(-100%);">17 392</div>
<div class="t" style="left:980px;top:768.8px;font-size:12px;color:#000;font-weight:normal;font-family:'Liberation Sans',sans-serif;transform:scaleX(0.92) translateX(-100%);">28 712</div>
<div class="t" style="left:1038px;top:768.8px;font-size:12px;color:#000;font-weight:normal;font-family:'Liberation Sans',sans-serif;transform:scaleX(0.92) translateX(-100%);">15 700</div>
<div class="t" style="left:1096px;top:768.8px;font-size:12px;color:#000;font-weight:normal;font-family:'Liberation Sans',sans-serif;transform:scaleX(0.92) translateX(-100%);">13 012</div>
<div class="a" style="left:586px;top:783px;width:13px;height:5px;background:#fff;border:1px solid #333;"></div>
<div class="a" style="left:1105px;top:641px;width:16px;height:147px;background:#f0f0f0;"></div>
<div class="a" style="left:1105px;top:657px;width:16px;height:22px;background:#cdcdcd;"></div>
<svg style="left:1108px;top:645px" width="10" height="6"><path d="M1 5l4-4 4 4" stroke="#333" fill="none" stroke-width="1.3"/></svg>
<svg style="left:1108px;top:776px" width="10" height="6"><path d="M1 1l4 4 4-4" stroke="#333" fill="none" stroke-width="1.3"/></svg>
<div class="a" style="left:581px;top:795px;width:541px;height:200px;background:#fff;border:1px solid #8a8a8a"></div>
<div class="a" style="left:581px;top:795px;width:541px;height:30px;background:linear-gradient(#e4e4e4,#c8c8c8 45%,#a8a8a8);border:1px solid #8a8a8a"></div>
<div class="t" style="left:588px;top:803.0px;font-size:13px;color:#f4f4f4;font-weight:normal;font-family:'Liberation Sans',sans-serif;transform:scaleX(0.99);">Физическая память</div>
<div class="a" style="left:733px;top:802px;width:11px;height:12px;background:#108010;border:1px solid #0a400a"></div>
<div class="t" style="left:750px;top:803.8px;font-size:12px;color:#f0f0f0;font-weight:normal;font-family:'Liberation Sans',sans-serif;transform:scaleX(0.95);">Используется: 1158 МБ</div>
<div class="a" style="left:915px;top:802px;width:11px;height:12px;background:#8ab8f0;border:1px solid #3050a0;border-top:2px solid #1a2a90"></div>
<div class="t" style="left:932px;top:803.8px;font-size:12px;color:#f0f0f0;font-weight:normal;font-family:'Liberation Sans',sans-serif;transform:scaleX(0.95);">Доступно: 6895 МБ</div>
<svg style="left:1091px;top:799px" width="20" height="20"><circle cx="10" cy="10" r="9" fill="#f4f4f4" stroke="#777" stroke-width="1"/><path d="M6 12l4-4 4 4" stroke="#111" stroke-width="1.8" fill="none"/></svg>
<div class="a" style="left:590px;top:841px;width:523px;height:23px;background:linear-gradient(#a8c8f0,#c0d8f4 50%,#a4c4ec);border:1px solid #a0a0a0"></div>
<div class="a" style="left:591px;top:842px;width:3px;height:21px;background:#b8b8b8;"></div>
<div class="a" style="left:594px;top:842px;width:74px;height:21px;background:linear-gradient(#8cbc20,#70a010);"></div>
<div class="a" style="left:668px;top:842px;width:4px;height:21px;background:#e89020;"></div>
<div class="a" style="left:672px;top:842px;width:41px;height:21px;background:linear-gradient(#4a8ad8,#3a78c8);"></div>
<div class="a" style="left:618px;top:873px;width:14px;height:13px;background:#c0c0c0;border:1px solid #999"></div>
<div class="t" style="left:636px;top:875.8px;font-size:12px;color:#000;font-weight:normal;font-family:'Liberation Sans',sans-serif;transform:scaleX(0.97);">Зарезервирс</div>
<div class="t" style="left:636px;top:890.8px;font-size:12px;color:#000;font-weight:normal;font-family:'Liberation Sans',sans-serif;transform:scaleX(0.97);">оборудова...</div>
<div class="t" style="left:635px;top:905.8px;font-size:12px;color:#000;font-weight:normal;font-family:'Liberation Sans',sans-serif;transform:scaleX(0.97);">62 мегабайт</div>
<div class="a" style="left:712px;top:873px;width:14px;height:13px;background:#80b020;border:1px solid #999"></div>
<div class="t" style="left:730px;top:875.8px;font-size:12px;color:#000;font-weight:normal;font-family:'Liberation Sans',sans-serif;transform:scaleX(0.97);">Используе...</div>
<div class="t" style="left:730px;top:890.8px;font-size:12px;color:#000;font-weight:normal;font-family:'Liberation Sans',sans-serif;transform:scaleX(0.97);">1158</div>
<div class="t" style="left:730px;top:905.8px;font-size:12px;color:#000;font-weight:normal;font-family:'Liberation Sans',sans-serif;transform:scaleX(0.97);">мегабайт</div>
<div class="a" style="left:806px;top:873px;width:14px;height:13px;background:#f09020;border:1px solid #999"></div>
<div class="t" style="left:824px;top:875.8px;font-size:12px;color:#000;font-weight:normal;font-family:'Liberation Sans',sans-serif;transform:scaleX(0.97);">Изменено</div>
<div class="t" style="left:824px;top:890.8px;font-size:12px;color:#000;font-weight:normal;font-family:'Liberation Sans',sans-serif;transform:scaleX(0.97);">77 мегабайт</div>
<div class="a" style="left:900px;top:873px;width:14px;height:13px;background:#4a88d8;border:1px solid #999"></div>
<div class="t" style="left:918px;top:875.8px;font-size:12px;color:#000;font-weight:normal;font-family:'Liberation Sans',sans-serif;transform:scaleX(0.97);">Ожидание</div>
<div class="t" style="left:918px;top:890.8px;font-size:12px;color:#000;font-weight:normal;font-family:'Liberation Sans',sans-serif;transform:scaleX(0.97);">630 мегабайт</div>
<div class="a" style="left:994px;top:873px;width:14px;height:13px;background:#b8d4f4;border:1px solid #999"></div>
<div class="t" style="left:1012px;top:875.8px;font-size:12px;color:#000;font-weight:normal;font-family:'Liberation Sans',sans-serif;transform:scaleX(0.97);">Свободно</div>
<div class="t" style="left:1012px;top:890.8px;font-size:12px;color:#000;font-weight:normal;font-family:'Liberation Sans',sans-serif;transform:scaleX(0.97);">6265</div>
<div class="t" style="left:1012px;top:905.8px;font-size:12px;color:#000;font-weight:normal;font-family:'Liberation Sans',sans-serif;transform:scaleX(0.97);">мегабайт</div>
<div class="t" style="left:769px;top:927.8px;font-size:12px;color:#000;font-weight:normal;font-family:'Liberation Sans',sans-serif;transform:scaleX(1.0);">Доступно</div>
<div class="t" style="left:934px;top:927.8px;font-size:12px;color:#000;font-weight:normal;font-family:'Liberation Sans',sans-serif;transform:scaleX(0.96) translateX(-100%);">6895 мегабайт</div>
<div class="t" style="left:769px;top:942.8px;font-size:12px;color:#000;font-weight:normal;font-family:'Liberation Sans',sans-serif;transform:scaleX(1.0);">Кэшировано</div>
<div class="t" style="left:934px;top:942.8px;font-size:12px;color:#000;font-weight:normal;font-family:'Liberation Sans',sans-serif;transform:scaleX(0.96) translateX(-100%);">707 мегабайт</div>
<div class="t" style="left:769px;top:957.8px;font-size:12px;color:#000;font-weight:normal;font-family:'Liberation Sans',sans-serif;transform:scaleX(1.0);">Всего</div>
<div class="t" style="left:934px;top:957.8px;font-size:12px;color:#000;font-weight:normal;font-family:'Liberation Sans',sans-serif;transform:scaleX(0.96) translateX(-100%);">8130 мегабайт</div>
<div class="t" style="left:769px;top:972.8px;font-size:12px;color:#000;font-weight:normal;font-family:'Liberation Sans',sans-serif;transform:scaleX(1.0);">Установлено</div>
<div class="t" style="left:934px;top:972.8px;font-size:12px;color:#000;font-weight:normal;font-family:'Liberation Sans',sans-serif;transform:scaleX(0.96) translateX(-100%);">8192 мегабайт</div>
<svg style="left:1127px;top:614px" width="10" height="6"><path d="M1 5l4-4 4 4" stroke="#c8c8c8" fill="none" stroke-width="1.2"/></svg>
<svg style="left:1127px;top:993px" width="10" height="6"><path d="M1 1l4 4 4-4" stroke="#c8c8c8" fill="none" stroke-width="1.2"/></svg>
<div class="a" style="left:1140px;top:608px;width:1px;height:396px;background:#5a5a5a;"></div>
<div class="a" style="left:1146px;top:611px;width:200px;height:393px;background:#fff;border:1px solid #8a8a8a;border-bottom:none"></div>
<div class="a" style="left:1146px;top:611px;width:200px;height:29px;background:linear-gradient(#e4e4e4,#c8c8c8 45%,#a8a8a8);border:1px solid #8a8a8a"></div>
<svg style="left:1156px;top:615px" width="20" height="20"><circle cx="10" cy="10" r="9" fill="#f4f4f4" stroke="#777" stroke-width="1"/><path d="M8.5 6l4 4-4 4" stroke="#111" stroke-width="1.8" fill="none"/></svg>
<div class="a" style="left:1247px;top:614px;width:84px;height:23px;background:#e4e4e4;border:1px solid #bcbcbc"></div>
<div class="t" style="left:1281px;top:619.8px;font-size:12px;color:#000;font-weight:normal;font-family:'Liberation Sans',sans-serif;transform:scaleX(1.0) translateX(-50%);">Вид</div>
<div class="a" style="left:1318px;top:617px;width:1px;height:17px;background:#444;"></div>
<svg style="left:1320px;top:621px" width="10" height="7"><path d="M0 0h9l-4.5 6z" fill="#111"/></svg>
<div class="t" style="left:1159px;top:645.8px;font-size:12px;color:#000;font-weight:normal;font-family:'Liberation Sans',sans-serif;transform:scaleX(0.99);">Использование физич...</div>
<div class="t" style="left:1325px;top:645.8px;font-size:12px;color:#000;font-weight:normal;font-family:'Liberation Sans',sans-serif;transform:scaleX(0.92) translateX(-100%);">100%</div>
<svg style="left:1158px;top:662px" width="169" height="101" shape-rendering="crispEdges"><rect width="169" height="101" fill="#000"/><path d="M7.5,0V101M22.5,0V101M37.5,0V101M52.5,0V101M67.5,0V101M82.5,0V101M97.5,0V101M112.5,0V101M127.5,0V101M142.5,0V101M157.5,0V101M0,1.5H169M0,16.5H169M0,31.5H169M0,46.5H169M0,61.5H169M0,76.5H169M0,91.5H169" stroke="#28b048" stroke-width="1"/><path d="M58,101L61.5,87H169V101Z" fill="#0a780a" opacity="0.85"/><path d="M58,101L61.5,87H169" stroke="#40f040" stroke-width="1.5" fill="none"/></svg>
<div class="a" style="left:1157px;top:661px;width:171px;height:1px;background:#9a9a9a;"></div>
<div class="t" style="left:1159px;top:766.8px;font-size:12px;color:#000;font-weight:normal;font-family:'Liberation Sans',sans-serif;transform:scaleX(0.99);">60 секунд</div>
<div class="t" style="left:1325px;top:766.8px;font-size:12px;color:#000;font-weight:normal;font-family:'Liberation Sans',sans-serif;transform:scaleX(0.92) translateX(-100%);">0%</div>
<div class="t" style="left:1159px;top:783.8px;font-size:12px;color:#000;font-weight:normal;font-family:'Liberation Sans',sans-serif;transform:scaleX(0.99);">Выделение памяти</div>
<div class="t" style="left:1325px;top:783.8px;font-size:12px;color:#000;font-weight:normal;font-family:'Liberation Sans',sans-serif;transform:scaleX(0.92) translateX(-100%);">100%</div>
<svg style="left:1158px;top:800px" width="169" height="101" shape-rendering="crispEdges"><rect width="169" height="101" fill="#000"/><path d="M7.5,0V101M22.5,0V101M37.5,0V101M52.5,0V101M67.5,0V101M82.5,0V101M97.5,0V101M112.5,0V101M127.5,0V101M142.5,0V101M157.5,0V101M0,1.5H169M0,16.5H169M0,31.5H169M0,46.5H169M0,61.5H169M0,76.5H169M0,91.5H169" stroke="#28b048" stroke-width="1"/><path d="M58,101L61.5,91H169V101Z" fill="#0a780a" opacity="0.85"/><path d="M58,101L61.5,91H169" stroke="#40f040" stroke-width="1.5" fill="none"/></svg>
<div class="a" style="left:1157px;top:799px;width:171px;height:1px;background:#9a9a9a;"></div>
<div class="t" style="left:1325px;top:904.8px;font-size:12px;color:#000;font-weight:normal;font-family:'Liberation Sans',sans-serif;transform:scaleX(0.92) translateX(-100%);">0%</div>
<div class="t" style="left:1159px;top:921.8px;font-size:12px;color:#000;font-weight:normal;font-family:'Liberation Sans',sans-serif;transform:scaleX(0.99);">Ошибок отсутствия стр...</div>
<div class="t" style="left:1325px;top:921.8px;font-size:12px;color:#000;font-weight:normal;font-family:'Liberation Sans',sans-serif;transform:scaleX(0.92) translateX(-100%);">100</div>
<div class="a" style="left:1157px;top:937px;width:171px;height:1px;background:#9a9a9a;"></div>
<svg style="left:1158px;top:939px" width="169" height="65" shape-rendering="crispEdges"><rect width="169" height="65" fill="#000"/><path d="M7.5,0V65M22.5,0V65M37.5,0V65M52.5,0V65M67.5,0V65M82.5,0V65M97.5,0V65M112.5,0V65M127.5,0V65M142.5,0V65M157.5,0V65M0,1.5H169M0,16.5H169M0,31.5H169M0,46.5H169M0,61.5H169" stroke="#28b048" stroke-width="1"/><rect x="66" y="48" width="3" height="18" fill="#30e030"/></svg>
<div class="a" style="left:1347px;top:611px;width:16px;height:393px;background:#f0f0f0;"></div>
<div class="a" style="left:1349px;top:640px;width:12px;height:300px;background:#cdcdcd;"></div>
<svg style="left:1350px;top:617px" width="10" height="6"><path d="M1 5l4-4 4 4" stroke="#333" fill="none" stroke-width="1.3"/></svg>
<svg style="left:1350px;top:993px" width="10" height="6"><path d="M1 1l4 4 4-4" stroke="#333" fill="none" stroke-width="1.3"/></svg>
<div class="a" style="left:0px;top:1040px;width:1920px;height:40px;background:#094684;"></div>
<div class="a" style="left:280px;top:1040px;width:54px;height:40px;background:#2566aa;"></div>
<div class="a" style="left:112px;top:1078px;width:53px;height:2px;background:#8ac4f4;"></div>
<div class="a" style="left:224px;top:1078px;width:54px;height:2px;background:#8ac4f4;"></div>
<div class="a" style="left:280px;top:1078px;width:54px;height:2px;background:#8ac4f4;"></div>
<svg style="left:6px;top:1041px" width="42" height="40"><defs><radialGradient id="orb" cx="0.5" cy="0.35" r="0.65"><stop offset="0" stop-color="#8ad0f0"/><stop offset="0.6" stop-color="#1a6ab8"/><stop offset="1" stop-color="#0a3a70"/></radialGradient></defs><circle cx="21" cy="20" r="18" fill="url(#orb)" stroke="#8ab8e0" stroke-width="1"/><path d="M12 13q4-2 8 0v7q-4-2-8 0z" fill="#f05020"/><path d="M21 13q4 2 8 0v7q-4 2-8 0z" fill="#70c030"/><path d="M12 21q4-2 8 0v7q-4-2-8 0z" fill="#30a0f0"/><path d="M21 21q4 2 8 0v7q-4 2-8 0z" fill="#f8c020"/></svg>
<svg style="left:67px;top:1045px" width="31" height="31" viewBox="0 0 48 48"><defs><linearGradient id="ie67" x1="0" y1="0" x2="0" y2="1"><stop offset="0" stop-color="#7ad8ff"/><stop offset="1" stop-color="#0a60c8"/></linearGradient></defs><path d="M40 25H17C17 31 21 35 27 35C31 35 34 33 36 30H45C42 38 35 44 27 44C16 44 8 36 8 25C8 14 16 6 27 6C38 6 46 14 40 25zM17 20H36C35 15 31 12 27 12C22 12 18 15 17 20z" fill="url(#ie67)"/><path d="M4 40C0 34 14 14 30 7C42 2 48 4 44 12" stroke="#f0c020" stroke-width="3.5" fill="none"/></svg>
<svg style="left:118px;top:1046px" width="34" height="30"><path d="M1 3h11l2 3h18v22H1z" fill="#f0d890" stroke="#b89a40" stroke-width="0.8"/><rect x="4" y="7" width="26" height="6" fill="#fff8e0"/><rect x="8" y="3" width="3" height="3" fill="#6a8"/><rect x="20" y="7" width="3" height="3" fill="#d66"/><rect x="5" y="16" width="24" height="12" fill="#8ac0e8"/><rect x="9" y="22" width="16" height="6" fill="#f0d060"/></svg>
<svg style="left:180px;top:1047px" width="28" height="28"><rect x="4" y="0" width="23" height="26" fill="#bcdcf4"/><rect x="0" y="2" width="22" height="25" fill="#5aa8e8" stroke="#9ccaf0"/><circle cx="11" cy="14" r="8" fill="#f08020"/><path d="M8.5 9.5l7 4.5-7 4.5z" fill="#fff"/></svg>
<svg style="left:235px;top:1044px" width="32" height="34"><rect x="1" y="2" width="30" height="22" fill="#111" stroke="#333"/><path d="M3 12l5-1 3-5 3 8 3-4h11" stroke="#9ae040" stroke-width="1.5" fill="none"/><rect x="5" y="17" width="6" height="2" fill="#885"/><rect x="13" y="17" width="6" height="2" fill="#885"/><rect x="21" y="17" width="6" height="2" fill="#885"/><path d="M12 24h8l3 6H9z" fill="#111"/></svg>
<svg style="left:290px;top:1044px" width="34" height="34"><circle cx="17" cy="17" r="15" fill="#d8d0c8" stroke="#a09890" stroke-width="2"/><circle cx="17" cy="17" r="11.5" fill="#f4f0ec"/><path d="M9 12a9 9 0 0 1 12-5" stroke="#c07050" stroke-width="2" fill="none"/><path d="M11 8l7 11 3-7" stroke="#8a1a1a" stroke-width="2.2" fill="none"/></svg>
<div class="t" style="left:1712px;top:1051.8px;font-size:12px;color:#e8f0f8;font-weight:normal;font-family:'Liberation Sans',sans-serif;transform:scaleX(1.0);">RU</div>
<svg style="left:1742px;top:1056px" width="14" height="8"><path d="M1 7l6-6 6 6" stroke="#e8f0f8" stroke-width="1.5" fill="none"/></svg>
<svg style="left:1766px;top:1051px" width="18" height="18"><path d="M3 1v16" stroke="#9ab"/><path d="M3 2q5-2 7 1t6 1v7q-4 1-6-1t-7 0z" fill="#5a8ae0"/></svg>
<svg style="left:1790px;top:1052px" width="18" height="16"><rect x="4" y="1" width="13" height="9" fill="#8ab" stroke="#456"/><rect x="1" y="5" width="12" height="9" fill="#3a70c8" stroke="#234"/><circle cx="13" cy="12" r="4" fill="#4ab060"/></svg>
<svg style="left:1813px;top:1052px" width="18" height="16"><path d="M1 5h4l5-4v14l-5-4H1z" fill="#c8c8c8"/><path d="M12 4q3 4 0 8" stroke="#8aa" fill="none"/></svg>
<div class="t" style="left:1871px;top:1046.8px;font-size:12px;color:#e8f0f8;font-weight:normal;font-family:'Liberation Sans',sans-serif;transform:scaleX(1.0) translateX(-50%);">13:32</div>
<div class="t" style="left:1871px;top:1063.8px;font-size:12px;color:#e8f0f8;font-weight:normal;font-family:'Liberation Sans',sans-serif;transform:scaleX(0.92) translateX(-50%);">25.06.2016</div>
<div class="a" style="left:1912px;top:1040px;width:1px;height:40px;background:#6a9ac8;"></div>
</body></html>
